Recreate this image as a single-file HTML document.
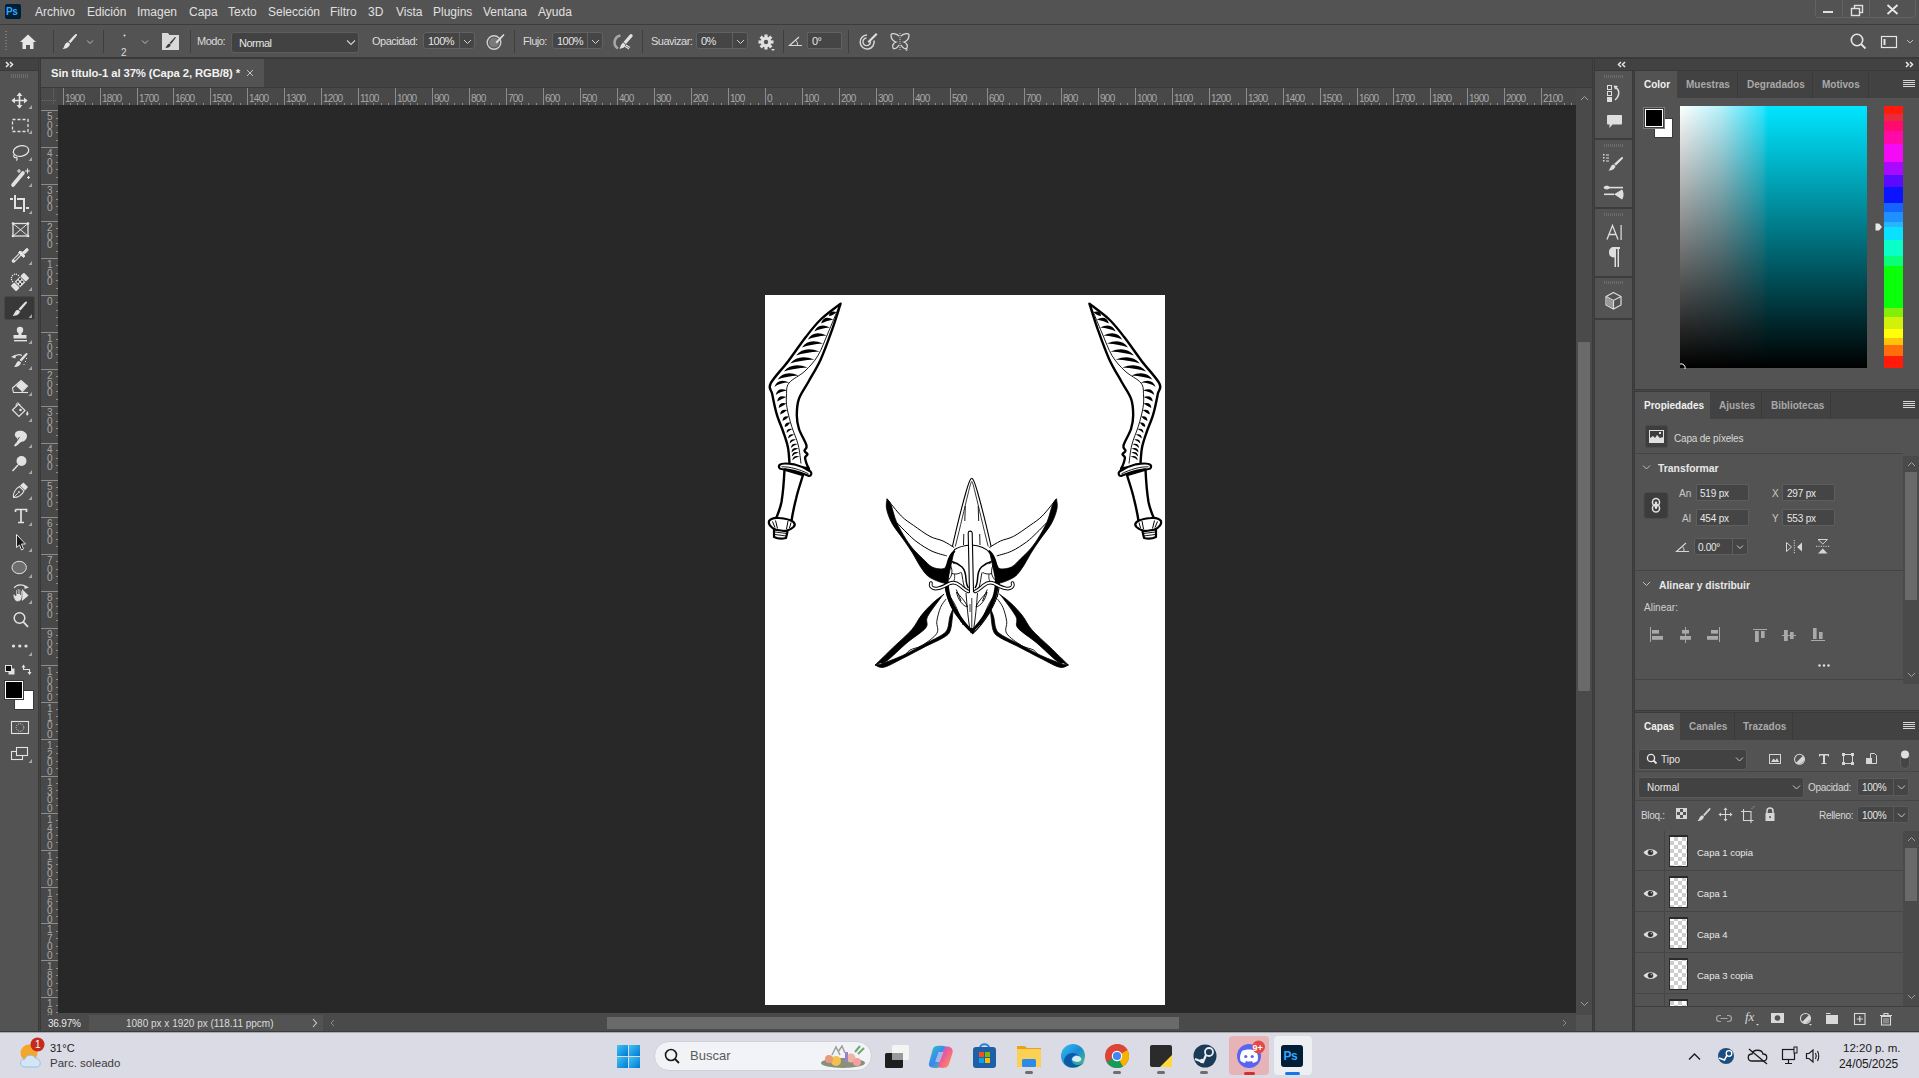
<!DOCTYPE html>
<html><head><meta charset="utf-8">
<style>
*{box-sizing:border-box;margin:0;padding:0}
html,body{width:1919px;height:1078px;overflow:hidden;background:#535353;font-family:"Liberation Sans",sans-serif;color:#e0e0e0}
.a{position:absolute}
.t{position:absolute;white-space:nowrap;font-size:12px;line-height:14px}
.s{position:absolute;white-space:nowrap;font-size:11px;line-height:13px;letter-spacing:-0.5px;color:#dcdcdc}
.rl{position:absolute;white-space:nowrap;font-size:10px;line-height:10px;color:#a8a8a8;letter-spacing:-0.7px}
.sep{position:absolute;width:1px;background:#424242}
.inp{position:absolute;background:#454545;border:1px solid #616161;border-radius:3px}
svg{position:absolute;overflow:visible}
.ic{fill:#d6d6d6}
.st{fill:none;stroke:#d6d6d6;stroke-width:1.3}
</style></head><body>
<!-- menu bar -->
<div class="a" style="left:0;top:0;width:1919px;height:24px;background:#535353"></div>
<div class="a" style="left:0;top:24px;width:1919px;height:1px;background:#3c3c3c"></div>
<!-- options bar -->
<div class="a" style="left:0;top:25px;width:1919px;height:33px;background:#535353"></div>
<div class="a" style="left:0;top:57px;width:1919px;height:2px;background:#3a3a3a"></div>
<!-- left toolbar column -->
<div class="a" style="left:0;top:59px;width:38px;height:973px;background:#535353"></div>
<div class="a" style="left:0;top:59px;width:38px;height:11px;background:#424242"></div><div class="a" style="left:0;top:70px;width:38px;height:1px;background:#393939"></div>
<div class="a" style="left:38px;top:59px;width:3px;height:972px;background:#393939;border-left:1px solid #393939;border-right:1px solid #393939"></div><div class="a" style="left:39px;top:59px;width:1px;height:972px;background:#434343"></div>
<!-- doc tab bar -->
<div class="a" style="left:41px;top:59px;width:1551px;height:28px;background:#424242"></div>
<div class="a" style="left:41px;top:59px;width:223px;height:28px;background:#535353"></div>
<div class="a" style="left:41px;top:87px;width:1551px;height:1px;background:#3a3a3a"></div>
<!-- rulers -->
<div class="a" style="left:41px;top:88px;width:1535px;height:17px;background:#484848"></div>
<div class="a" style="left:41px;top:105px;width:17px;height:910px;background:#484848"></div>
<div class="a" style="left:41px;top:88px;width:17px;height:17px;background:#4a4a4a"></div><svg style="left:0;top:0" width="1" height="1"><path d="M53.5 89 V104" stroke="#737373" stroke-width="1" stroke-dasharray="1 1.2"/><path d="M42 100.5 H57" stroke="#737373" stroke-width="1" stroke-dasharray="1 1.2"/></svg>
<!-- canvas area -->
<div class="a" style="left:58px;top:105px;width:1518px;height:910px;background:#282828"></div>
<!-- vertical scrollbar -->
<div class="a" style="left:1576px;top:88px;width:16px;height:927px;background:#4a4a4a"></div>
<div class="a" style="left:1578px;top:342px;width:12px;height:349px;background:#6a6a6a;border-radius:1px"></div>
<!-- status bar -->
<div class="a" style="left:41px;top:1013px;width:1551px;height:19px;background:#4a4a4a"></div>
<div class="a" style="left:1592px;top:59px;width:3px;height:972px;background:#393939"></div><div class="a" style="left:1593px;top:59px;width:1px;height:972px;background:#434343"></div>
<!-- right panels -->
<div class="a" style="left:1595px;top:59px;width:324px;height:11px;background:#424242"></div><div class="a" style="left:1595px;top:70px;width:324px;height:1px;background:#393939"></div>
<div class="a" style="left:1595px;top:71px;width:37px;height:961px;background:#535353"></div>
<div class="a" style="left:1632px;top:71px;width:3px;height:960px;background:#393939"></div><div class="a" style="left:1633px;top:71px;width:1px;height:960px;background:#434343"></div>
<div class="a" style="left:1635px;top:71px;width:284px;height:961px;background:#535353"></div>
<!-- white document -->
<div class="a" style="left:765px;top:295px;width:400px;height:710px;background:#fff"></div>
<svg width="1919" height="1078" style="left:0;top:0;position:absolute" shape-rendering="crispEdges">
<rect x="63" y="88" width="1" height="17" fill="#8c8c8c"/>
<rect x="70" y="103" width="1" height="2" fill="#8c8c8c"/>
<rect x="77" y="103" width="1" height="2" fill="#8c8c8c"/>
<rect x="85" y="103" width="1" height="2" fill="#8c8c8c"/>
<rect x="92" y="103" width="1" height="2" fill="#8c8c8c"/>
<rect x="100" y="88" width="1" height="17" fill="#8c8c8c"/>
<rect x="107" y="103" width="1" height="2" fill="#8c8c8c"/>
<rect x="114" y="103" width="1" height="2" fill="#8c8c8c"/>
<rect x="122" y="103" width="1" height="2" fill="#8c8c8c"/>
<rect x="129" y="103" width="1" height="2" fill="#8c8c8c"/>
<rect x="137" y="88" width="1" height="17" fill="#8c8c8c"/>
<rect x="144" y="103" width="1" height="2" fill="#8c8c8c"/>
<rect x="151" y="103" width="1" height="2" fill="#8c8c8c"/>
<rect x="159" y="103" width="1" height="2" fill="#8c8c8c"/>
<rect x="166" y="103" width="1" height="2" fill="#8c8c8c"/>
<rect x="173" y="88" width="1" height="17" fill="#8c8c8c"/>
<rect x="181" y="103" width="1" height="2" fill="#8c8c8c"/>
<rect x="188" y="103" width="1" height="2" fill="#8c8c8c"/>
<rect x="196" y="103" width="1" height="2" fill="#8c8c8c"/>
<rect x="203" y="103" width="1" height="2" fill="#8c8c8c"/>
<rect x="210" y="88" width="1" height="17" fill="#8c8c8c"/>
<rect x="218" y="103" width="1" height="2" fill="#8c8c8c"/>
<rect x="225" y="103" width="1" height="2" fill="#8c8c8c"/>
<rect x="233" y="103" width="1" height="2" fill="#8c8c8c"/>
<rect x="240" y="103" width="1" height="2" fill="#8c8c8c"/>
<rect x="247" y="88" width="1" height="17" fill="#8c8c8c"/>
<rect x="255" y="103" width="1" height="2" fill="#8c8c8c"/>
<rect x="262" y="103" width="1" height="2" fill="#8c8c8c"/>
<rect x="270" y="103" width="1" height="2" fill="#8c8c8c"/>
<rect x="277" y="103" width="1" height="2" fill="#8c8c8c"/>
<rect x="284" y="88" width="1" height="17" fill="#8c8c8c"/>
<rect x="292" y="103" width="1" height="2" fill="#8c8c8c"/>
<rect x="299" y="103" width="1" height="2" fill="#8c8c8c"/>
<rect x="307" y="103" width="1" height="2" fill="#8c8c8c"/>
<rect x="314" y="103" width="1" height="2" fill="#8c8c8c"/>
<rect x="321" y="88" width="1" height="17" fill="#8c8c8c"/>
<rect x="329" y="103" width="1" height="2" fill="#8c8c8c"/>
<rect x="336" y="103" width="1" height="2" fill="#8c8c8c"/>
<rect x="344" y="103" width="1" height="2" fill="#8c8c8c"/>
<rect x="351" y="103" width="1" height="2" fill="#8c8c8c"/>
<rect x="358" y="88" width="1" height="17" fill="#8c8c8c"/>
<rect x="366" y="103" width="1" height="2" fill="#8c8c8c"/>
<rect x="373" y="103" width="1" height="2" fill="#8c8c8c"/>
<rect x="381" y="103" width="1" height="2" fill="#8c8c8c"/>
<rect x="388" y="103" width="1" height="2" fill="#8c8c8c"/>
<rect x="395" y="88" width="1" height="17" fill="#8c8c8c"/>
<rect x="403" y="103" width="1" height="2" fill="#8c8c8c"/>
<rect x="410" y="103" width="1" height="2" fill="#8c8c8c"/>
<rect x="417" y="103" width="1" height="2" fill="#8c8c8c"/>
<rect x="425" y="103" width="1" height="2" fill="#8c8c8c"/>
<rect x="432" y="88" width="1" height="17" fill="#8c8c8c"/>
<rect x="440" y="103" width="1" height="2" fill="#8c8c8c"/>
<rect x="447" y="103" width="1" height="2" fill="#8c8c8c"/>
<rect x="454" y="103" width="1" height="2" fill="#8c8c8c"/>
<rect x="462" y="103" width="1" height="2" fill="#8c8c8c"/>
<rect x="469" y="88" width="1" height="17" fill="#8c8c8c"/>
<rect x="477" y="103" width="1" height="2" fill="#8c8c8c"/>
<rect x="484" y="103" width="1" height="2" fill="#8c8c8c"/>
<rect x="491" y="103" width="1" height="2" fill="#8c8c8c"/>
<rect x="499" y="103" width="1" height="2" fill="#8c8c8c"/>
<rect x="506" y="88" width="1" height="17" fill="#8c8c8c"/>
<rect x="514" y="103" width="1" height="2" fill="#8c8c8c"/>
<rect x="521" y="103" width="1" height="2" fill="#8c8c8c"/>
<rect x="528" y="103" width="1" height="2" fill="#8c8c8c"/>
<rect x="536" y="103" width="1" height="2" fill="#8c8c8c"/>
<rect x="543" y="88" width="1" height="17" fill="#8c8c8c"/>
<rect x="551" y="103" width="1" height="2" fill="#8c8c8c"/>
<rect x="558" y="103" width="1" height="2" fill="#8c8c8c"/>
<rect x="565" y="103" width="1" height="2" fill="#8c8c8c"/>
<rect x="573" y="103" width="1" height="2" fill="#8c8c8c"/>
<rect x="580" y="88" width="1" height="17" fill="#8c8c8c"/>
<rect x="588" y="103" width="1" height="2" fill="#8c8c8c"/>
<rect x="595" y="103" width="1" height="2" fill="#8c8c8c"/>
<rect x="602" y="103" width="1" height="2" fill="#8c8c8c"/>
<rect x="610" y="103" width="1" height="2" fill="#8c8c8c"/>
<rect x="617" y="88" width="1" height="17" fill="#8c8c8c"/>
<rect x="625" y="103" width="1" height="2" fill="#8c8c8c"/>
<rect x="632" y="103" width="1" height="2" fill="#8c8c8c"/>
<rect x="639" y="103" width="1" height="2" fill="#8c8c8c"/>
<rect x="647" y="103" width="1" height="2" fill="#8c8c8c"/>
<rect x="654" y="88" width="1" height="17" fill="#8c8c8c"/>
<rect x="661" y="103" width="1" height="2" fill="#8c8c8c"/>
<rect x="669" y="103" width="1" height="2" fill="#8c8c8c"/>
<rect x="676" y="103" width="1" height="2" fill="#8c8c8c"/>
<rect x="684" y="103" width="1" height="2" fill="#8c8c8c"/>
<rect x="691" y="88" width="1" height="17" fill="#8c8c8c"/>
<rect x="698" y="103" width="1" height="2" fill="#8c8c8c"/>
<rect x="706" y="103" width="1" height="2" fill="#8c8c8c"/>
<rect x="713" y="103" width="1" height="2" fill="#8c8c8c"/>
<rect x="721" y="103" width="1" height="2" fill="#8c8c8c"/>
<rect x="728" y="88" width="1" height="17" fill="#8c8c8c"/>
<rect x="735" y="103" width="1" height="2" fill="#8c8c8c"/>
<rect x="743" y="103" width="1" height="2" fill="#8c8c8c"/>
<rect x="750" y="103" width="1" height="2" fill="#8c8c8c"/>
<rect x="758" y="103" width="1" height="2" fill="#8c8c8c"/>
<rect x="765" y="88" width="1" height="17" fill="#8c8c8c"/>
<rect x="772" y="103" width="1" height="2" fill="#8c8c8c"/>
<rect x="780" y="103" width="1" height="2" fill="#8c8c8c"/>
<rect x="787" y="103" width="1" height="2" fill="#8c8c8c"/>
<rect x="795" y="103" width="1" height="2" fill="#8c8c8c"/>
<rect x="802" y="88" width="1" height="17" fill="#8c8c8c"/>
<rect x="809" y="103" width="1" height="2" fill="#8c8c8c"/>
<rect x="817" y="103" width="1" height="2" fill="#8c8c8c"/>
<rect x="824" y="103" width="1" height="2" fill="#8c8c8c"/>
<rect x="832" y="103" width="1" height="2" fill="#8c8c8c"/>
<rect x="839" y="88" width="1" height="17" fill="#8c8c8c"/>
<rect x="846" y="103" width="1" height="2" fill="#8c8c8c"/>
<rect x="854" y="103" width="1" height="2" fill="#8c8c8c"/>
<rect x="861" y="103" width="1" height="2" fill="#8c8c8c"/>
<rect x="869" y="103" width="1" height="2" fill="#8c8c8c"/>
<rect x="876" y="88" width="1" height="17" fill="#8c8c8c"/>
<rect x="883" y="103" width="1" height="2" fill="#8c8c8c"/>
<rect x="891" y="103" width="1" height="2" fill="#8c8c8c"/>
<rect x="898" y="103" width="1" height="2" fill="#8c8c8c"/>
<rect x="905" y="103" width="1" height="2" fill="#8c8c8c"/>
<rect x="913" y="88" width="1" height="17" fill="#8c8c8c"/>
<rect x="920" y="103" width="1" height="2" fill="#8c8c8c"/>
<rect x="928" y="103" width="1" height="2" fill="#8c8c8c"/>
<rect x="935" y="103" width="1" height="2" fill="#8c8c8c"/>
<rect x="942" y="103" width="1" height="2" fill="#8c8c8c"/>
<rect x="950" y="88" width="1" height="17" fill="#8c8c8c"/>
<rect x="957" y="103" width="1" height="2" fill="#8c8c8c"/>
<rect x="965" y="103" width="1" height="2" fill="#8c8c8c"/>
<rect x="972" y="103" width="1" height="2" fill="#8c8c8c"/>
<rect x="979" y="103" width="1" height="2" fill="#8c8c8c"/>
<rect x="987" y="88" width="1" height="17" fill="#8c8c8c"/>
<rect x="994" y="103" width="1" height="2" fill="#8c8c8c"/>
<rect x="1002" y="103" width="1" height="2" fill="#8c8c8c"/>
<rect x="1009" y="103" width="1" height="2" fill="#8c8c8c"/>
<rect x="1016" y="103" width="1" height="2" fill="#8c8c8c"/>
<rect x="1024" y="88" width="1" height="17" fill="#8c8c8c"/>
<rect x="1031" y="103" width="1" height="2" fill="#8c8c8c"/>
<rect x="1039" y="103" width="1" height="2" fill="#8c8c8c"/>
<rect x="1046" y="103" width="1" height="2" fill="#8c8c8c"/>
<rect x="1053" y="103" width="1" height="2" fill="#8c8c8c"/>
<rect x="1061" y="88" width="1" height="17" fill="#8c8c8c"/>
<rect x="1068" y="103" width="1" height="2" fill="#8c8c8c"/>
<rect x="1076" y="103" width="1" height="2" fill="#8c8c8c"/>
<rect x="1083" y="103" width="1" height="2" fill="#8c8c8c"/>
<rect x="1090" y="103" width="1" height="2" fill="#8c8c8c"/>
<rect x="1098" y="88" width="1" height="17" fill="#8c8c8c"/>
<rect x="1105" y="103" width="1" height="2" fill="#8c8c8c"/>
<rect x="1113" y="103" width="1" height="2" fill="#8c8c8c"/>
<rect x="1120" y="103" width="1" height="2" fill="#8c8c8c"/>
<rect x="1127" y="103" width="1" height="2" fill="#8c8c8c"/>
<rect x="1135" y="88" width="1" height="17" fill="#8c8c8c"/>
<rect x="1142" y="103" width="1" height="2" fill="#8c8c8c"/>
<rect x="1149" y="103" width="1" height="2" fill="#8c8c8c"/>
<rect x="1157" y="103" width="1" height="2" fill="#8c8c8c"/>
<rect x="1164" y="103" width="1" height="2" fill="#8c8c8c"/>
<rect x="1172" y="88" width="1" height="17" fill="#8c8c8c"/>
<rect x="1179" y="103" width="1" height="2" fill="#8c8c8c"/>
<rect x="1186" y="103" width="1" height="2" fill="#8c8c8c"/>
<rect x="1194" y="103" width="1" height="2" fill="#8c8c8c"/>
<rect x="1201" y="103" width="1" height="2" fill="#8c8c8c"/>
<rect x="1209" y="88" width="1" height="17" fill="#8c8c8c"/>
<rect x="1216" y="103" width="1" height="2" fill="#8c8c8c"/>
<rect x="1223" y="103" width="1" height="2" fill="#8c8c8c"/>
<rect x="1231" y="103" width="1" height="2" fill="#8c8c8c"/>
<rect x="1238" y="103" width="1" height="2" fill="#8c8c8c"/>
<rect x="1246" y="88" width="1" height="17" fill="#8c8c8c"/>
<rect x="1253" y="103" width="1" height="2" fill="#8c8c8c"/>
<rect x="1260" y="103" width="1" height="2" fill="#8c8c8c"/>
<rect x="1268" y="103" width="1" height="2" fill="#8c8c8c"/>
<rect x="1275" y="103" width="1" height="2" fill="#8c8c8c"/>
<rect x="1283" y="88" width="1" height="17" fill="#8c8c8c"/>
<rect x="1290" y="103" width="1" height="2" fill="#8c8c8c"/>
<rect x="1297" y="103" width="1" height="2" fill="#8c8c8c"/>
<rect x="1305" y="103" width="1" height="2" fill="#8c8c8c"/>
<rect x="1312" y="103" width="1" height="2" fill="#8c8c8c"/>
<rect x="1320" y="88" width="1" height="17" fill="#8c8c8c"/>
<rect x="1327" y="103" width="1" height="2" fill="#8c8c8c"/>
<rect x="1334" y="103" width="1" height="2" fill="#8c8c8c"/>
<rect x="1342" y="103" width="1" height="2" fill="#8c8c8c"/>
<rect x="1349" y="103" width="1" height="2" fill="#8c8c8c"/>
<rect x="1357" y="88" width="1" height="17" fill="#8c8c8c"/>
<rect x="1364" y="103" width="1" height="2" fill="#8c8c8c"/>
<rect x="1371" y="103" width="1" height="2" fill="#8c8c8c"/>
<rect x="1379" y="103" width="1" height="2" fill="#8c8c8c"/>
<rect x="1386" y="103" width="1" height="2" fill="#8c8c8c"/>
<rect x="1393" y="88" width="1" height="17" fill="#8c8c8c"/>
<rect x="1401" y="103" width="1" height="2" fill="#8c8c8c"/>
<rect x="1408" y="103" width="1" height="2" fill="#8c8c8c"/>
<rect x="1416" y="103" width="1" height="2" fill="#8c8c8c"/>
<rect x="1423" y="103" width="1" height="2" fill="#8c8c8c"/>
<rect x="1430" y="88" width="1" height="17" fill="#8c8c8c"/>
<rect x="1438" y="103" width="1" height="2" fill="#8c8c8c"/>
<rect x="1445" y="103" width="1" height="2" fill="#8c8c8c"/>
<rect x="1453" y="103" width="1" height="2" fill="#8c8c8c"/>
<rect x="1460" y="103" width="1" height="2" fill="#8c8c8c"/>
<rect x="1467" y="88" width="1" height="17" fill="#8c8c8c"/>
<rect x="1475" y="103" width="1" height="2" fill="#8c8c8c"/>
<rect x="1482" y="103" width="1" height="2" fill="#8c8c8c"/>
<rect x="1490" y="103" width="1" height="2" fill="#8c8c8c"/>
<rect x="1497" y="103" width="1" height="2" fill="#8c8c8c"/>
<rect x="1504" y="88" width="1" height="17" fill="#8c8c8c"/>
<rect x="1512" y="103" width="1" height="2" fill="#8c8c8c"/>
<rect x="1519" y="103" width="1" height="2" fill="#8c8c8c"/>
<rect x="1527" y="103" width="1" height="2" fill="#8c8c8c"/>
<rect x="1534" y="103" width="1" height="2" fill="#8c8c8c"/>
<rect x="1541" y="88" width="1" height="17" fill="#8c8c8c"/>
<rect x="1549" y="103" width="1" height="2" fill="#8c8c8c"/>
<rect x="1556" y="103" width="1" height="2" fill="#8c8c8c"/>
<rect x="1564" y="103" width="1" height="2" fill="#8c8c8c"/>
<rect x="1571" y="103" width="1" height="2" fill="#8c8c8c"/>
<rect x="41" y="110" width="17" height="1" fill="#8c8c8c"/>
<rect x="56" y="118" width="2" height="1" fill="#8c8c8c"/>
<rect x="56" y="125" width="2" height="1" fill="#8c8c8c"/>
<rect x="56" y="132" width="2" height="1" fill="#8c8c8c"/>
<rect x="56" y="140" width="2" height="1" fill="#8c8c8c"/>
<rect x="41" y="147" width="17" height="1" fill="#8c8c8c"/>
<rect x="56" y="155" width="2" height="1" fill="#8c8c8c"/>
<rect x="56" y="162" width="2" height="1" fill="#8c8c8c"/>
<rect x="56" y="169" width="2" height="1" fill="#8c8c8c"/>
<rect x="56" y="177" width="2" height="1" fill="#8c8c8c"/>
<rect x="41" y="184" width="17" height="1" fill="#8c8c8c"/>
<rect x="56" y="191" width="2" height="1" fill="#8c8c8c"/>
<rect x="56" y="199" width="2" height="1" fill="#8c8c8c"/>
<rect x="56" y="206" width="2" height="1" fill="#8c8c8c"/>
<rect x="56" y="214" width="2" height="1" fill="#8c8c8c"/>
<rect x="41" y="221" width="17" height="1" fill="#8c8c8c"/>
<rect x="56" y="228" width="2" height="1" fill="#8c8c8c"/>
<rect x="56" y="236" width="2" height="1" fill="#8c8c8c"/>
<rect x="56" y="243" width="2" height="1" fill="#8c8c8c"/>
<rect x="56" y="251" width="2" height="1" fill="#8c8c8c"/>
<rect x="41" y="258" width="17" height="1" fill="#8c8c8c"/>
<rect x="56" y="265" width="2" height="1" fill="#8c8c8c"/>
<rect x="56" y="273" width="2" height="1" fill="#8c8c8c"/>
<rect x="56" y="280" width="2" height="1" fill="#8c8c8c"/>
<rect x="56" y="288" width="2" height="1" fill="#8c8c8c"/>
<rect x="41" y="295" width="17" height="1" fill="#8c8c8c"/>
<rect x="56" y="302" width="2" height="1" fill="#8c8c8c"/>
<rect x="56" y="310" width="2" height="1" fill="#8c8c8c"/>
<rect x="56" y="317" width="2" height="1" fill="#8c8c8c"/>
<rect x="56" y="325" width="2" height="1" fill="#8c8c8c"/>
<rect x="41" y="332" width="17" height="1" fill="#8c8c8c"/>
<rect x="56" y="339" width="2" height="1" fill="#8c8c8c"/>
<rect x="56" y="347" width="2" height="1" fill="#8c8c8c"/>
<rect x="56" y="354" width="2" height="1" fill="#8c8c8c"/>
<rect x="56" y="362" width="2" height="1" fill="#8c8c8c"/>
<rect x="41" y="369" width="17" height="1" fill="#8c8c8c"/>
<rect x="56" y="376" width="2" height="1" fill="#8c8c8c"/>
<rect x="56" y="384" width="2" height="1" fill="#8c8c8c"/>
<rect x="56" y="391" width="2" height="1" fill="#8c8c8c"/>
<rect x="56" y="399" width="2" height="1" fill="#8c8c8c"/>
<rect x="41" y="406" width="17" height="1" fill="#8c8c8c"/>
<rect x="56" y="413" width="2" height="1" fill="#8c8c8c"/>
<rect x="56" y="421" width="2" height="1" fill="#8c8c8c"/>
<rect x="56" y="428" width="2" height="1" fill="#8c8c8c"/>
<rect x="56" y="435" width="2" height="1" fill="#8c8c8c"/>
<rect x="41" y="443" width="17" height="1" fill="#8c8c8c"/>
<rect x="56" y="450" width="2" height="1" fill="#8c8c8c"/>
<rect x="56" y="458" width="2" height="1" fill="#8c8c8c"/>
<rect x="56" y="465" width="2" height="1" fill="#8c8c8c"/>
<rect x="56" y="472" width="2" height="1" fill="#8c8c8c"/>
<rect x="41" y="480" width="17" height="1" fill="#8c8c8c"/>
<rect x="56" y="487" width="2" height="1" fill="#8c8c8c"/>
<rect x="56" y="495" width="2" height="1" fill="#8c8c8c"/>
<rect x="56" y="502" width="2" height="1" fill="#8c8c8c"/>
<rect x="56" y="509" width="2" height="1" fill="#8c8c8c"/>
<rect x="41" y="517" width="17" height="1" fill="#8c8c8c"/>
<rect x="56" y="524" width="2" height="1" fill="#8c8c8c"/>
<rect x="56" y="532" width="2" height="1" fill="#8c8c8c"/>
<rect x="56" y="539" width="2" height="1" fill="#8c8c8c"/>
<rect x="56" y="546" width="2" height="1" fill="#8c8c8c"/>
<rect x="41" y="554" width="17" height="1" fill="#8c8c8c"/>
<rect x="56" y="561" width="2" height="1" fill="#8c8c8c"/>
<rect x="56" y="569" width="2" height="1" fill="#8c8c8c"/>
<rect x="56" y="576" width="2" height="1" fill="#8c8c8c"/>
<rect x="56" y="583" width="2" height="1" fill="#8c8c8c"/>
<rect x="41" y="591" width="17" height="1" fill="#8c8c8c"/>
<rect x="56" y="598" width="2" height="1" fill="#8c8c8c"/>
<rect x="56" y="606" width="2" height="1" fill="#8c8c8c"/>
<rect x="56" y="613" width="2" height="1" fill="#8c8c8c"/>
<rect x="56" y="620" width="2" height="1" fill="#8c8c8c"/>
<rect x="41" y="628" width="17" height="1" fill="#8c8c8c"/>
<rect x="56" y="635" width="2" height="1" fill="#8c8c8c"/>
<rect x="56" y="643" width="2" height="1" fill="#8c8c8c"/>
<rect x="56" y="650" width="2" height="1" fill="#8c8c8c"/>
<rect x="56" y="657" width="2" height="1" fill="#8c8c8c"/>
<rect x="41" y="665" width="17" height="1" fill="#8c8c8c"/>
<rect x="56" y="672" width="2" height="1" fill="#8c8c8c"/>
<rect x="56" y="679" width="2" height="1" fill="#8c8c8c"/>
<rect x="56" y="687" width="2" height="1" fill="#8c8c8c"/>
<rect x="56" y="694" width="2" height="1" fill="#8c8c8c"/>
<rect x="41" y="702" width="17" height="1" fill="#8c8c8c"/>
<rect x="56" y="709" width="2" height="1" fill="#8c8c8c"/>
<rect x="56" y="716" width="2" height="1" fill="#8c8c8c"/>
<rect x="56" y="724" width="2" height="1" fill="#8c8c8c"/>
<rect x="56" y="731" width="2" height="1" fill="#8c8c8c"/>
<rect x="41" y="739" width="17" height="1" fill="#8c8c8c"/>
<rect x="56" y="746" width="2" height="1" fill="#8c8c8c"/>
<rect x="56" y="753" width="2" height="1" fill="#8c8c8c"/>
<rect x="56" y="761" width="2" height="1" fill="#8c8c8c"/>
<rect x="56" y="768" width="2" height="1" fill="#8c8c8c"/>
<rect x="41" y="776" width="17" height="1" fill="#8c8c8c"/>
<rect x="56" y="783" width="2" height="1" fill="#8c8c8c"/>
<rect x="56" y="790" width="2" height="1" fill="#8c8c8c"/>
<rect x="56" y="798" width="2" height="1" fill="#8c8c8c"/>
<rect x="56" y="805" width="2" height="1" fill="#8c8c8c"/>
<rect x="41" y="813" width="17" height="1" fill="#8c8c8c"/>
<rect x="56" y="820" width="2" height="1" fill="#8c8c8c"/>
<rect x="56" y="827" width="2" height="1" fill="#8c8c8c"/>
<rect x="56" y="835" width="2" height="1" fill="#8c8c8c"/>
<rect x="56" y="842" width="2" height="1" fill="#8c8c8c"/>
<rect x="41" y="850" width="17" height="1" fill="#8c8c8c"/>
<rect x="56" y="857" width="2" height="1" fill="#8c8c8c"/>
<rect x="56" y="864" width="2" height="1" fill="#8c8c8c"/>
<rect x="56" y="872" width="2" height="1" fill="#8c8c8c"/>
<rect x="56" y="879" width="2" height="1" fill="#8c8c8c"/>
<rect x="41" y="887" width="17" height="1" fill="#8c8c8c"/>
<rect x="56" y="894" width="2" height="1" fill="#8c8c8c"/>
<rect x="56" y="901" width="2" height="1" fill="#8c8c8c"/>
<rect x="56" y="909" width="2" height="1" fill="#8c8c8c"/>
<rect x="56" y="916" width="2" height="1" fill="#8c8c8c"/>
<rect x="41" y="923" width="17" height="1" fill="#8c8c8c"/>
<rect x="56" y="931" width="2" height="1" fill="#8c8c8c"/>
<rect x="56" y="938" width="2" height="1" fill="#8c8c8c"/>
<rect x="56" y="946" width="2" height="1" fill="#8c8c8c"/>
<rect x="56" y="953" width="2" height="1" fill="#8c8c8c"/>
<rect x="41" y="960" width="17" height="1" fill="#8c8c8c"/>
<rect x="56" y="968" width="2" height="1" fill="#8c8c8c"/>
<rect x="56" y="975" width="2" height="1" fill="#8c8c8c"/>
<rect x="56" y="983" width="2" height="1" fill="#8c8c8c"/>
<rect x="56" y="990" width="2" height="1" fill="#8c8c8c"/>
<rect x="41" y="997" width="17" height="1" fill="#8c8c8c"/>
<rect x="56" y="1005" width="2" height="1" fill="#8c8c8c"/>
<rect x="56" y="1012" width="2" height="1" fill="#8c8c8c"/>
</svg>
<div class="rl" style="left:65px;top:94px">1900</div>
<div class="rl" style="left:102px;top:94px">1800</div>
<div class="rl" style="left:139px;top:94px">1700</div>
<div class="rl" style="left:175px;top:94px">1600</div>
<div class="rl" style="left:212px;top:94px">1500</div>
<div class="rl" style="left:249px;top:94px">1400</div>
<div class="rl" style="left:286px;top:94px">1300</div>
<div class="rl" style="left:323px;top:94px">1200</div>
<div class="rl" style="left:360px;top:94px">1100</div>
<div class="rl" style="left:397px;top:94px">1000</div>
<div class="rl" style="left:434px;top:94px">900</div>
<div class="rl" style="left:471px;top:94px">800</div>
<div class="rl" style="left:508px;top:94px">700</div>
<div class="rl" style="left:545px;top:94px">600</div>
<div class="rl" style="left:582px;top:94px">500</div>
<div class="rl" style="left:619px;top:94px">400</div>
<div class="rl" style="left:656px;top:94px">300</div>
<div class="rl" style="left:693px;top:94px">200</div>
<div class="rl" style="left:730px;top:94px">100</div>
<div class="rl" style="left:767px;top:94px">0</div>
<div class="rl" style="left:804px;top:94px">100</div>
<div class="rl" style="left:841px;top:94px">200</div>
<div class="rl" style="left:878px;top:94px">300</div>
<div class="rl" style="left:915px;top:94px">400</div>
<div class="rl" style="left:952px;top:94px">500</div>
<div class="rl" style="left:989px;top:94px">600</div>
<div class="rl" style="left:1026px;top:94px">700</div>
<div class="rl" style="left:1063px;top:94px">800</div>
<div class="rl" style="left:1100px;top:94px">900</div>
<div class="rl" style="left:1137px;top:94px">1000</div>
<div class="rl" style="left:1174px;top:94px">1100</div>
<div class="rl" style="left:1211px;top:94px">1200</div>
<div class="rl" style="left:1248px;top:94px">1300</div>
<div class="rl" style="left:1285px;top:94px">1400</div>
<div class="rl" style="left:1322px;top:94px">1500</div>
<div class="rl" style="left:1359px;top:94px">1600</div>
<div class="rl" style="left:1395px;top:94px">1700</div>
<div class="rl" style="left:1432px;top:94px">1800</div>
<div class="rl" style="left:1469px;top:94px">1900</div>
<div class="rl" style="left:1506px;top:94px">2000</div>
<div class="rl" style="left:1543px;top:94px">2100</div>
<div style="position:absolute;left:41px;top:105px;width:17px;height:910px;overflow:hidden">
<div class="rl" style="left:6px;top:7.0px">5</div>
<div class="rl" style="left:6px;top:15.5px">0</div>
<div class="rl" style="left:6px;top:24.0px">0</div>
<div class="rl" style="left:6px;top:44.0px">4</div>
<div class="rl" style="left:6px;top:52.5px">0</div>
<div class="rl" style="left:6px;top:61.0px">0</div>
<div class="rl" style="left:6px;top:81.0px">3</div>
<div class="rl" style="left:6px;top:89.5px">0</div>
<div class="rl" style="left:6px;top:98.0px">0</div>
<div class="rl" style="left:6px;top:118.0px">2</div>
<div class="rl" style="left:6px;top:126.5px">0</div>
<div class="rl" style="left:6px;top:135.0px">0</div>
<div class="rl" style="left:6px;top:155.0px">1</div>
<div class="rl" style="left:6px;top:163.5px">0</div>
<div class="rl" style="left:6px;top:172.0px">0</div>
<div class="rl" style="left:6px;top:192.0px">0</div>
<div class="rl" style="left:6px;top:229.0px">1</div>
<div class="rl" style="left:6px;top:237.5px">0</div>
<div class="rl" style="left:6px;top:246.0px">0</div>
<div class="rl" style="left:6px;top:266.0px">2</div>
<div class="rl" style="left:6px;top:274.5px">0</div>
<div class="rl" style="left:6px;top:283.0px">0</div>
<div class="rl" style="left:6px;top:303.0px">3</div>
<div class="rl" style="left:6px;top:311.5px">0</div>
<div class="rl" style="left:6px;top:320.0px">0</div>
<div class="rl" style="left:6px;top:340.0px">4</div>
<div class="rl" style="left:6px;top:348.5px">0</div>
<div class="rl" style="left:6px;top:357.0px">0</div>
<div class="rl" style="left:6px;top:377.0px">5</div>
<div class="rl" style="left:6px;top:385.5px">0</div>
<div class="rl" style="left:6px;top:394.0px">0</div>
<div class="rl" style="left:6px;top:414.0px">6</div>
<div class="rl" style="left:6px;top:422.5px">0</div>
<div class="rl" style="left:6px;top:431.0px">0</div>
<div class="rl" style="left:6px;top:451.0px">7</div>
<div class="rl" style="left:6px;top:459.5px">0</div>
<div class="rl" style="left:6px;top:468.0px">0</div>
<div class="rl" style="left:6px;top:488.0px">8</div>
<div class="rl" style="left:6px;top:496.5px">0</div>
<div class="rl" style="left:6px;top:505.0px">0</div>
<div class="rl" style="left:6px;top:525.0px">9</div>
<div class="rl" style="left:6px;top:533.5px">0</div>
<div class="rl" style="left:6px;top:542.0px">0</div>
<div class="rl" style="left:6px;top:562.0px">1</div>
<div class="rl" style="left:6px;top:570.5px">0</div>
<div class="rl" style="left:6px;top:579.0px">0</div>
<div class="rl" style="left:6px;top:587.5px">0</div>
<div class="rl" style="left:6px;top:599.0px">1</div>
<div class="rl" style="left:6px;top:607.5px">1</div>
<div class="rl" style="left:6px;top:616.0px">0</div>
<div class="rl" style="left:6px;top:624.5px">0</div>
<div class="rl" style="left:6px;top:636.0px">1</div>
<div class="rl" style="left:6px;top:644.5px">2</div>
<div class="rl" style="left:6px;top:653.0px">0</div>
<div class="rl" style="left:6px;top:661.5px">0</div>
<div class="rl" style="left:6px;top:673.0px">1</div>
<div class="rl" style="left:6px;top:681.5px">3</div>
<div class="rl" style="left:6px;top:690.0px">0</div>
<div class="rl" style="left:6px;top:698.5px">0</div>
<div class="rl" style="left:6px;top:710.0px">1</div>
<div class="rl" style="left:6px;top:718.5px">4</div>
<div class="rl" style="left:6px;top:727.0px">0</div>
<div class="rl" style="left:6px;top:735.5px">0</div>
<div class="rl" style="left:6px;top:747.0px">1</div>
<div class="rl" style="left:6px;top:755.5px">5</div>
<div class="rl" style="left:6px;top:764.0px">0</div>
<div class="rl" style="left:6px;top:772.5px">0</div>
<div class="rl" style="left:6px;top:784.0px">1</div>
<div class="rl" style="left:6px;top:792.5px">6</div>
<div class="rl" style="left:6px;top:801.0px">0</div>
<div class="rl" style="left:6px;top:809.5px">0</div>
<div class="rl" style="left:6px;top:820.0px">1</div>
<div class="rl" style="left:6px;top:828.5px">7</div>
<div class="rl" style="left:6px;top:837.0px">0</div>
<div class="rl" style="left:6px;top:845.5px">0</div>
<div class="rl" style="left:6px;top:857.0px">1</div>
<div class="rl" style="left:6px;top:865.5px">8</div>
<div class="rl" style="left:6px;top:874.0px">0</div>
<div class="rl" style="left:6px;top:882.5px">0</div>
<div class="rl" style="left:6px;top:894.0px">1</div>
<div class="rl" style="left:6px;top:902.5px">9</div>
<div class="rl" style="left:6px;top:911.0px">0</div>
<div class="rl" style="left:6px;top:919.5px">0</div>
</div>
<!-- PS logo -->
<div class="a" style="left:5px;top:4px;width:16px;height:15px;background:#001e36;border-radius:2px"></div>
<div class="a" style="left:6px;top:5px;font-size:10px;line-height:13px;font-weight:700;color:#31a8ff;letter-spacing:-0.3px">Ps</div>
<div class="t" style="left:35px;top:5px">Archivo</div>
<div class="t" style="left:87px;top:5px">Edición</div>
<div class="t" style="left:137px;top:5px">Imagen</div>
<div class="t" style="left:189px;top:5px">Capa</div>
<div class="t" style="left:228px;top:5px">Texto</div>
<div class="t" style="left:268px;top:5px">Selección</div>
<div class="t" style="left:330px;top:5px">Filtro</div>
<div class="t" style="left:368px;top:5px">3D</div>
<div class="t" style="left:396px;top:5px">Vista</div>
<div class="t" style="left:433px;top:5px">Plugins</div>
<div class="t" style="left:483px;top:5px">Ventana</div>
<div class="t" style="left:538px;top:5px">Ayuda</div>
<!-- window controls -->
<div class="a" style="left:1815px;top:-3px;width:101px;height:21px;border:1px solid #626262;border-radius:3px"></div>
<div class="a" style="left:1842px;top:0;width:1px;height:17px;background:#626262"></div>
<div class="a" style="left:1869px;top:0;width:1px;height:17px;background:#626262"></div>
<svg style="left:0;top:0" width="1" height="1">
<rect x="1823" y="11" width="10" height="2" fill="#e0e0e0"/>
<rect x="1854.5" y="5.5" width="8" height="7" fill="none" stroke="#e0e0e0" stroke-width="1.4"/>
<rect x="1851.5" y="8.5" width="8" height="7" fill="#535353" stroke="#e0e0e0" stroke-width="1.4"/>
<path d="M1887.5 5 L1897.5 14 M1897.5 5 L1887.5 14" stroke="#e8e8e8" stroke-width="1.8"/>
</svg>
<svg style="left:0;top:0" width="1" height="1">
<!-- grip -->
<g fill="#7a7a7a"><rect x="5" y="31" width="2" height="1"/><rect x="5" y="34" width="2" height="1"/><rect x="5" y="37" width="2" height="1"/><rect x="5" y="40" width="2" height="1"/><rect x="5" y="43" width="2" height="1"/><rect x="5" y="46" width="2" height="1"/><rect x="5" y="49" width="2" height="1"/></g>
<!-- home -->
<path d="M28 34.5 L36 42 L33.5 42 L33.5 49 L30 49 L30 45 L26 45 L26 49 L22.5 49 L22.5 42 L20 42 Z" fill="#e6e6e6"/>
<rect x="53" y="30" width="1" height="23" fill="#3e3e3e"/>
<!-- brush icon -->
<path d="M76.5 34 C77.5 34.5 77 35.5 76 36.5 L70.5 43 L68.5 41.5 L74 35.5 C75 34.5 75.8 33.8 76.5 34 Z" fill="#e6e6e6"/>
<path d="M68 42.3 L70 43.8 C69.5 46.5 67.5 49 62.5 49 C64 47.5 64 46.5 65 44.5 C65.8 43 67 42.5 68 42.3 Z" fill="#e6e6e6"/>
<path d="M87 40.5 L90 43.5 L93 40.5" fill="none" stroke="#bdbdbd" stroke-width="1"/>
<rect x="103" y="30" width="1" height="23" fill="#3e3e3e"/>
<circle cx="124.5" cy="35.5" r="1" fill="#e6e6e6"/>
<path d="M142 40.5 L145 43.5 L148 40.5" fill="none" stroke="#bdbdbd" stroke-width="1"/>
<!-- brush panel toggle -->
<path d="M162 33 L168 33 L169.5 35 L179 35 L179 50 L162 50 Z" fill="#d9d9d9"/>
<path d="M176 37.5 L171 44 L169.5 43 L175 37 Z" fill="#3a3a3a"/>
<path d="M169 43.5 L170.8 44.8 C170 47 168.5 48 165.5 48 C166.5 46.5 167 44.5 169 43.5Z" fill="#3a3a3a"/>
<rect x="190" y="30" width="1" height="23" fill="#3e3e3e"/>
</svg>
<div class="s" style="left:121px;top:46px;font-size:10px">2</div>
<div class="s" style="left:197px;top:35px">Modo:</div>
<div class="inp" style="left:231px;top:32px;width:128px;height:21px;background:#424242;border-color:#5d5d5d"></div>
<div class="s" style="left:239px;top:37px;color:#e6e6e6">Normal</div>
<svg style="left:0;top:0" width="1" height="1">
<path d="M347 40.5 L351 44.5 L355 40.5" fill="none" stroke="#d0d0d0" stroke-width="1.1"/>
</svg>
<div class="s" style="left:372px;top:35px">Opacidad:</div>
<div class="inp" style="left:423px;top:32px;width:52px;height:17px"></div>
<div class="a" style="left:459px;top:33px;width:1px;height:15px;background:#616161"></div>
<div class="s" style="left:428px;top:35px;color:#e6e6e6">100%</div>
<div class="s" style="left:523px;top:35px">Flujo:</div>
<div class="inp" style="left:552px;top:32px;width:51px;height:17px"></div>
<div class="a" style="left:587px;top:33px;width:1px;height:15px;background:#616161"></div>
<div class="s" style="left:557px;top:35px;color:#e6e6e6">100%</div>
<div class="s" style="left:651px;top:35px">Suavizar:</div>
<div class="inp" style="left:696px;top:32px;width:52px;height:17px"></div>
<div class="a" style="left:732px;top:33px;width:1px;height:15px;background:#616161"></div>
<div class="s" style="left:701px;top:35px;color:#e6e6e6">0%</div>
<div class="inp" style="left:807px;top:32px;width:35px;height:17px;border-radius:1px"></div>
<div class="s" style="left:812px;top:35px;color:#e6e6e6">0°</div>
<svg style="left:0;top:0" width="1" height="1">
<path d="M464 40 L467.5 43.5 L471 40" fill="none" stroke="#d0d0d0" stroke-width="1"/>
<path d="M592 40 L595.5 43.5 L599 40" fill="none" stroke="#d0d0d0" stroke-width="1"/>
<path d="M737 40 L740.5 43.5 L744 40" fill="none" stroke="#d0d0d0" stroke-width="1"/>
<!-- airbrush icon 1 -->
<circle cx="494" cy="42.5" r="6.8" fill="none" stroke="#cfcfcf" stroke-width="1.4"/>
<circle cx="494" cy="42.5" r="5" fill="#7a7a7a"/>
<path d="M503.5 34 L504.5 35 L497 43.5 L495.5 42 Z" fill="#e0e0e0"/>
<rect x="514" y="30" width="1" height="23" fill="#3e3e3e"/>
<!-- pressure icon 2 -->
<path d="M620.5 35.5 C614.5 36.5 612 44.5 618 48.5" fill="none" stroke="#a6a6a6" stroke-width="2.6"/>
<path d="M631 34 C632.5 34.5 633 35.5 632.5 36.5 L626 44 L623.5 42 L629.5 35 C630 34.3 630.5 34 631 34Z" fill="#e2e2e2"/>
<path d="M623 42.5 L625.5 44.5 L624 47.5 L619.5 49 L621 45Z" fill="#e2e2e2"/>
<path d="M624.5 46 L629 49 M626 45 L630 47.5" stroke="#e2e2e2" stroke-width="1.1"/>
<rect x="642" y="30" width="1" height="23" fill="#3e3e3e"/>
<!-- gear -->
<g transform="translate(766 42)"><circle r="5.2" fill="#e0e0e0"/><g fill="#e0e0e0"><rect x="-1.6" y="-7.5" width="3.2" height="15"/><rect x="-7.5" y="-1.6" width="15" height="3.2"/><rect x="-1.6" y="-7.5" width="3.2" height="15" transform="rotate(45)"/><rect x="-1.6" y="-7.5" width="3.2" height="15" transform="rotate(-45)"/></g><circle r="2.2" fill="#535353"/></g>
<path d="M771 49 L775 49 L773 51 Z" fill="#e0e0e0"/>
<rect x="783" y="30" width="1" height="23" fill="#3e3e3e"/>
<!-- angle -->
<path d="M802 45.5 L789.5 45.5 L799 37" fill="none" stroke="#d6d6d6" stroke-width="1.2"/>
<path d="M795.5 40 Q798 42 797.5 45.5" fill="none" stroke="#d6d6d6" stroke-width="1"/>
<rect x="848" y="30" width="1" height="23" fill="#3e3e3e"/>
<!-- target pressure icon -->
<path d="M874 40.5 A7 7 0 1 1 867 35" fill="none" stroke="#d6d6d6" stroke-width="1.5"/>
<path d="M870.5 41.5 A3.8 3.8 0 1 1 866.5 38" fill="none" stroke="#d6d6d6" stroke-width="1.4"/>
<path d="M876 33 L877.5 34.5 L869 43 L867.5 41.5 Z" fill="#e0e0e0"/>
<!-- butterfly -->
<path d="M899 36 C896 33 891 33 891 35 C891 38 893 41 896 42 C893 43 892 46 893 48 C895 50 898 47 899 45" fill="none" stroke="#d6d6d6" stroke-width="1.3"/>
<path d="M901 36 C904 33 909 33 909 35 C909 38 907 41 904 42 C907 43 908 46 907 48 C905 50 902 47 901 45" fill="none" stroke="#d6d6d6" stroke-width="1.3"/>
<path d="M900 33 L900 51" stroke="#d6d6d6" stroke-width="1" stroke-dasharray="1 1"/>
<path d="M905 49.5 L908 49.5 L906.5 51 Z" fill="#e0e0e0"/>
<!-- search -->
<circle cx="1857" cy="40" r="5.7" fill="none" stroke="#e6e6e6" stroke-width="1.6"/>
<path d="M1861 44 L1865.5 48.5" stroke="#e6e6e6" stroke-width="1.8"/>
<!-- workspace -->
<rect x="1881.5" y="36.5" width="15" height="11" fill="none" stroke="#e6e6e6" stroke-width="1.2"/>
<rect x="1883.5" y="39" width="2" height="6" fill="#e6e6e6"/>
<path d="M1907 40 L1910 43 L1913 40" fill="none" stroke="#bdbdbd" stroke-width="1"/>
</svg>
<div class="t" style="left:51px;top:66px;font-size:11.3px;font-weight:700;color:#f2f2f2;letter-spacing:-0.1px">Sin título-1 al 37% (Capa 2, RGB/8) *</div>
<svg style="left:0;top:0" width="1" height="1">
<path d="M247 70 L253 76 M253 70 L247 76" stroke="#d0d0d0" stroke-width="0.9"/>
<!-- >> left -->
<path d="M6 62 L8.5 64.5 L6 67 M10 62 L12.5 64.5 L10 67" fill="none" stroke="#e8e8e8" stroke-width="1.5"/>
<!-- << right top -->
<path d="M1621 62 L1618.5 64.5 L1621 67 M1625 62 L1622.5 64.5 L1625 67" fill="none" stroke="#e8e8e8" stroke-width="1.5"/>
<path d="M1906 62 L1908.5 64.5 L1906 67 M1910 62 L1912.5 64.5 L1910 67" fill="none" stroke="#e8e8e8" stroke-width="1.5"/>
<!-- scroll arrows -->
<path d="M1581 100 L1584.5 96.5 L1588 100" fill="none" stroke="#a0a0a0" stroke-width="1"/>
<path d="M1581 1002 L1584.5 1005.5 L1588 1002" fill="none" stroke="#a0a0a0" stroke-width="1"/>
</svg>
<svg style="left:0;top:0" width="1" height="1">
<!-- grip -->
<g fill="#6d6d6d"><rect x="11" y="74" width="1" height="4"/><rect x="13" y="74" width="1" height="4"/><rect x="15" y="74" width="1" height="4"/><rect x="17" y="74" width="1" height="4"/><rect x="19" y="74" width="1" height="4"/><rect x="21" y="74" width="1" height="4"/><rect x="23" y="74" width="1" height="4"/><rect x="25" y="74" width="1" height="4"/><rect x="27" y="74" width="1" height="4"/></g>
<!-- selected brush bg -->
<rect x="4.5" y="296.5" width="30" height="23" rx="2" fill="#383838" stroke="#474747" stroke-width="1"/>
<g fill="#a8a8a8">
<path d="M32 105 L32 109 L28.5 109Z"/><path d="M32 130 L32 134 L28.5 134Z"/><path d="M32 157 L32 161 L28.5 161Z"/><path d="M32 183 L32 187 L28.5 187Z"/><path d="M32 210.5 L32 214 L28.5 214Z"/>
<path d="M32 261 L32 265 L28.5 265Z"/><path d="M32 287 L32 291 L28.5 291Z"/><path d="M32 314 L32 318 L28.5 318Z"/><path d="M32 340 L32 344 L28.5 344Z"/><path d="M32 366 L32 370 L28.5 370Z"/><path d="M32 392 L32 396 L28.5 396Z"/><path d="M32 418 L32 422 L28.5 422Z"/><path d="M32 444 L32 448 L28.5 448Z"/><path d="M32 470 L32 474 L28.5 474Z"/><path d="M32 496 L32 500 L28.5 500Z"/><path d="M32 522 L32 526 L28.5 526Z"/><path d="M32 548 L32 552 L28.5 552Z"/><path d="M32 574 L32 578 L28.5 578Z"/><path d="M32 600 L32 604 L28.5 604Z"/><path d="M32 652 L32 656 L28.5 656Z"/><path d="M32 759 L32 763 L28.5 763Z"/>
</g>
<g fill="#e2e2e2" stroke="#e2e2e2">
<!-- move -->
<path d="M19.5 93 V108 M12 100.5 H27" stroke-width="1.6" fill="none"/>
<path d="M19.5 92.5 L16.5 96 H22.5Z M19.5 108.5 L16.5 105 H22.5Z M11.5 100.5 L15 97.5 V103.5Z M27.5 100.5 L24 97.5 V103.5Z" stroke="none"/>
<!-- marquee -->
<rect x="12.5" y="119.5" width="15.5" height="12" fill="none" stroke-width="1.3" stroke-dasharray="3 2"/>
<!-- lasso -->
<ellipse cx="21" cy="151" rx="7.8" ry="5.2" fill="none" stroke-width="1.3" transform="rotate(-12 21 151)"/>
<path d="M14 155 C13 157 15 158 16.5 157.5 C17.5 158.5 17.5 160 16 160.5" fill="none" stroke-width="1.2"/>
<!-- wand -->
<path d="M13 185 L23 173" stroke-width="3.6" stroke-linecap="round" fill="none"/>
<path d="M19 169 v4 M17 171 h4 M27.5 168.5 v5 M25 171 h5 M28.5 176 v3 M27 177.5 h3" stroke-width="1.1" fill="none"/>
<!-- crop -->
<path d="M10 199 H13 M15 195 V208 H22 M17 199 H24 V212 M26 208 H29" fill="none" stroke-width="2"/>
<!-- frame -->
<rect x="13" y="223.5" width="15" height="12.5" fill="none" stroke-width="1.3"/>
<path d="M13 223.5 L28 236 M28 223.5 L13 236" stroke-width="1" fill="none"/>
<circle cx="13" cy="223.5" r="1.3" stroke="none"/><circle cx="28" cy="223.5" r="1.3" stroke="none"/><circle cx="13" cy="236" r="1.3" stroke="none"/><circle cx="28" cy="236" r="1.3" stroke="none"/>
<!-- eyedropper -->
<path d="M13.5 261 L21.5 253" stroke-width="3.5" fill="none" stroke-linecap="round"/>
<path d="M14.5 260 L20.8 253.7" stroke="#535353" stroke-width="1.2" fill="none"/>
<path d="M20 251 L25 256 L23.5 257.5 L18.5 252.5Z M22.5 252.5 L26 249 C27.5 248 28.5 249 28 250.5 L24.5 254Z" stroke-width="1"/>
<!-- healing -->
<g transform="rotate(-45 20 282)" stroke="none">
<rect x="10.6" y="278.1" width="5.1" height="7.8" rx="1"/>
<rect x="16.5" y="278.1" width="7" height="7.8"/>
<rect x="24.3" y="278.1" width="5.1" height="7.8" rx="1"/>
</g>
<g fill="#3a3a3a" stroke="none"><rect x="19" y="278.3" width="2" height="2"/><rect x="16.8" y="280.8" width="2" height="2"/><rect x="21.2" y="280.8" width="2" height="2"/><rect x="19" y="283.2" width="2" height="2"/></g>
<g stroke="none"><circle cx="11.5" cy="277.5" r="0.75"/><circle cx="11.5" cy="279.5" r="0.75"/><circle cx="12.5" cy="281.5" r="0.75"/><circle cx="12.5" cy="275.5" r="0.75"/><circle cx="14.5" cy="274.2" r="0.75"/><circle cx="16.5" cy="274.2" r="0.75"/><circle cx="18.5" cy="275.5" r="0.75"/></g>
<!-- brush -->
<path d="M26.5 301.5 C27.5 302 27 303 26 304 L20.5 310.5 L18.5 309 L24 303 C25 302 25.8 301.3 26.5 301.5 Z" stroke="none"/>
<path d="M18 309.8 L20 311.3 C19.5 314 17.5 316 12.5 316 C14 314.5 14 313.5 15 312 C15.8 310.5 17 310 18 309.8 Z" stroke="none"/>
<!-- stamp -->
<circle cx="20" cy="330" r="3.2" stroke="none"/>
<path d="M18.5 332 h3 v3 h5 v3.5 h-13 v-3.5 h5Z" stroke="none"/>
<rect x="14" y="340" width="13" height="1.4" stroke="none"/>
<!-- history brush -->
<path d="M27 353 C28 353.5 27.5 354.5 26.5 355.5 L21.5 361.5 L19.5 360 L24.5 354.5 C25.5 353.5 26.3 352.8 27 353 Z" stroke="none"/>
<path d="M19 361 L21 362.5 C20.5 365 18.5 367 14 367 C15.5 365.5 15.5 364.5 16.5 363 C17.3 361.5 18 361.2 19 361 Z" stroke="none"/>
<path d="M22 355.5 C19 354 16 355 14.5 357" fill="none" stroke-width="1.1"/>
<path d="M11 357 L15.5 354.5 L15.5 358.5Z" stroke="none"/>
<path d="M26.5 358 v1 M25.5 361 v1 M24 364 v1" stroke-width="1" fill="none"/>
<!-- eraser -->
<path d="M21 380.5 L27.5 386 L21.5 392.5 L13.5 392.5 L12.5 388 Z" fill="none" stroke-width="1.1"/>
<path d="M21 380.5 L27.5 386 L22 391.5 L16 386Z" stroke="none"/>
<path d="M21.5 392.5 H28" stroke-width="1.1" fill="none"/>
<!-- bucket -->
<path d="M12.5 410 L18.5 404 L25 410.5 L19 416.5Z" fill="none" stroke-width="1.2"/>
<path d="M16.5 407 C15 402 19 402 20 405" fill="none" stroke-width="1"/>
<circle cx="20.5" cy="410" r="1.3" stroke="none"/>
<path d="M27.5 411 C28.5 413 29 414.5 27.5 415.5 C26 415.5 25.5 414 27.5 411Z" stroke="none"/>
<!-- smudge -->
<path d="M17 438 C14 436 14 432 18 431 C22 430 27 432 27 436 C27 439 24 442 21 442 C19.5 443 17 446 15 446.5 L14 445.5 C16 443 18.5 440 17 438Z" stroke="none"/>
<path d="M19.5 437 L15.5 443" stroke="#535353" stroke-width="1" fill="none"/>
<!-- dodge -->
<circle cx="21.5" cy="461" r="5" stroke="none"/>
<path d="M18 465 L12.5 471" stroke-width="1.5" fill="none"/>
<!-- pen -->
<path d="M13.5 497.5 C13 494 14.5 489 19.5 486.5 L24 491 C21.5 496 17 497.5 13.5 497.5Z" fill="none" stroke-width="1.1"/>
<path d="M20 485.5 L23.5 482.5 L28 487 L25 490.5Z" stroke="none"/>
<path d="M14 497 L18.5 492.5" stroke-width="0.9" fill="none"/>
<circle cx="19" cy="492" r="0.9" stroke="none"/>
<!-- type -->
<path d="M15.5 509.5 H26.5 V512 M15.5 509.5 V512 M21 509.5 V522.5 M18 522.5 H24" fill="none" stroke-width="1.7"/>
<!-- path select arrow -->
<path d="M16.5 534.5 L25.5 544 L21.5 544 L23.5 549 L21.5 550 L19.5 545 L16.5 547.5Z" fill="#1a1a1a" stroke-width="1"/>
<!-- ellipse -->
<ellipse cx="19.2" cy="567.5" rx="7.2" ry="6.2" fill="#6e6e6e" stroke-width="1"/>
<!-- hand rotate -->
<path d="M14 588 C17 584 23 584 26 587" fill="none" stroke-width="1.1"/>
<path d="M24.5 585 L29 587.5 L24.5 589Z" stroke="none"/>
<path d="M22 589 L28.5 595.5 L22 601Z" stroke="none"/>
<path d="M13 595 C14 594 15 595 16 596 V590.5 C16 589.5 17.5 589.5 17.5 590.5 V594 V589.5 C17.5 588.5 19 588.5 19 589.5 V594 V590 C19 589 20.5 589 20.5 590 V595 V591.5 C20.5 590.5 22 590.5 22 591.5 V597 C22 600 20 601.5 17.5 601.5 C15 601.5 14 599 13 595Z" stroke="#535353" stroke-width="0.6"/>
<!-- zoom -->
<circle cx="19.5" cy="618" r="5.3" fill="none" stroke-width="1.5"/>
<path d="M23.3 621.8 L28 626.8" stroke-width="1.8" fill="none"/>
<!-- more -->
<circle cx="13.5" cy="646" r="1.6" stroke="none"/><circle cx="19.8" cy="646" r="1.6" stroke="none"/><circle cx="26" cy="646" r="1.6" stroke="none"/>
<!-- default colors -->
<rect x="8.5" y="668.5" width="6" height="6" stroke="none"/>
<rect x="5.5" y="665.5" width="6" height="6" fill="#111" stroke-width="1"/>
<!-- swap -->
<path d="M23.5 665.5 L23.5 669.5 H29.5 V673" fill="none" stroke-width="1.1"/>
<path d="M21.5 667.5 L23.5 664.5 L25.5 667.5Z M27.5 672 L29.5 675 L31.5 672Z" stroke="none"/>
</g>
<!-- fg / bg -->
<rect x="14.5" y="690.5" width="19" height="19" fill="#fff" stroke="#3a3a3a" stroke-width="1"/>
<rect x="4.5" y="680.5" width="19" height="19" fill="#000" stroke="#3a3a3a" stroke-width="1"/>
<rect x="5.5" y="681.5" width="17" height="17" fill="#000" stroke="#fff" stroke-width="1"/>
<!-- quick mask -->
<rect x="11.5" y="721.5" width="17" height="12" fill="none" stroke="#e2e2e2" stroke-width="1.1"/>
<circle cx="20" cy="727.5" r="3.8" fill="none" stroke="#e2e2e2" stroke-width="1" stroke-dasharray="1 1.2"/>
<!-- screen mode -->
<rect x="11.5" y="751.5" width="11" height="8" fill="#535353" stroke="#e2e2e2" stroke-width="1.1"/>
<rect x="16.5" y="747.5" width="11" height="8" fill="#535353" stroke="#e2e2e2" stroke-width="1.1"/>
</svg>
<svg width="1919" height="1078" style="left:0;top:0;position:absolute">
<path d="M840.6,303.7 C837.3,306.3 826.5,313.9 820.7,319.5 C814.9,325.1 811.2,330.1 805.8,337.0 C800.4,343.9 794.1,353.4 788.2,361.2 C782.3,368.9 773.3,378.0 770.6,383.5 C767.9,389.0 771.2,388.9 772.2,394.0 C773.2,399.1 774.9,408.0 776.8,414.3 C778.6,420.6 781.4,426.4 783.3,432.0 C785.2,437.6 787.0,442.5 788.0,447.7 C789.0,452.9 789.2,460.4 789.5,463.0 L790,466 L806,468  L809.0,469.0 C808.6,468.1 807.1,465.4 806.5,463.5 C805.9,461.6 804.9,459.1 805.1,457.5 C805.3,455.9 807.6,455.3 807.5,454.2 C807.4,453.1 804.7,452.2 804.5,450.8 C804.3,449.4 807.4,449.1 806.5,445.5 C805.6,441.9 800.6,434.0 799.0,429.0 C797.4,424.0 796.8,420.4 796.8,415.3 C796.8,410.2 797.0,404.2 799.0,398.6 C801.0,393.0 805.0,388.0 808.6,381.5 C812.2,375.0 816.8,367.9 820.7,359.4 C824.6,350.9 828.5,339.9 831.8,330.6 C835.1,321.3 839.1,308.2 840.6,303.7 Z" fill="#fff" stroke="#000" stroke-width="2.4" stroke-linejoin="round"/>
<path d="M838.3,308.3 C836.6,312.4 831.4,325.1 828.0,333.0 C824.6,340.9 821.7,349.4 817.9,355.7 C814.1,362.0 809.8,366.4 805.0,371.0 C800.2,375.6 792.1,379.0 789.0,383.0 C785.9,387.0 786.8,390.9 786.5,395.0 C786.2,399.1 786.1,402.6 787.0,407.8 C787.9,413.0 789.8,420.2 791.7,426.4 C793.6,432.6 796.7,438.8 798.2,445.0 C799.8,451.2 800.5,460.4 801.0,463.5" fill="none" stroke="#000" stroke-width="0.9"/>
<path d="M828.9,316.0 Q829.5,309.9 836.5,312.0 Q832.7,315.9 828.9,316.0Z" fill="#000"/>
<path d="M821.1,323.5 Q823.6,314.6 833.3,319.5 Q825.7,321.0 821.1,323.5Z" fill="#000"/>
<path d="M814.3,331.5 Q818.5,321.8 830.0,327.5 Q820.2,328.3 814.3,331.5Z" fill="#000"/>
<path d="M807.8,339.5 Q813.6,329.7 826.6,335.5 Q815.0,336.3 807.8,339.5Z" fill="#000"/>
<path d="M802.0,347.5 Q808.8,337.6 823.0,343.5 Q810.1,344.3 802.0,347.5Z" fill="#000"/>
<path d="M796.1,355.5 Q804.1,345.6 819.5,351.5 Q805.2,352.3 796.1,355.5Z" fill="#000"/>
<path d="M790.2,363.5 Q798.5,353.6 814.4,359.5 Q799.6,360.3 790.2,363.5Z" fill="#000"/>
<path d="M783.9,371.5 Q792.0,361.6 807.7,367.5 Q793.1,368.3 783.9,371.5Z" fill="#000"/>
<path d="M777.6,379.5 Q784.5,369.6 798.7,375.5 Q785.7,376.3 777.6,379.5Z" fill="#000"/>
<path d="M774.4,387.0 Q778.0,377.2 789.4,382.5 Q779.7,382.7 774.4,387.0Z" fill="#000"/>
<path d="M775.7,395.0 Q777.6,386.4 787.1,390.5 Q779.7,391.7 775.7,395.0Z" fill="#000"/>
<path d="M777.2,401.5 Q778.1,394.3 786.3,397.0 Q780.7,399.4 777.2,401.5Z" fill="#000"/>
<path d="M778.7,408.0 Q779.1,401.5 786.5,403.5 Q782.0,406.5 778.7,408.0Z" fill="#000"/>
<path d="M780.2,414.5 Q780.3,408.5 787.3,410.0 Q783.4,413.3 780.2,414.5Z" fill="#000"/>
<path d="M782.6,421.0 Q782.4,415.4 788.9,416.5 Q785.8,420.1 782.6,421.0Z" fill="#000"/>
<path d="M784.8,427.0 Q784.3,421.8 790.4,422.5 Q787.9,426.3 784.8,427.0Z" fill="#000"/>
<path d="M786.6,433.0 Q786.5,428.0 792.3,429.0 Q788.5,430.9 786.6,433.0Z" fill="#000"/>
<path d="M788.2,438.5 Q788.2,433.3 794.2,434.5 Q790.2,436.3 788.2,438.5Z" fill="#000"/>
<path d="M789.7,443.5 Q789.8,438.2 796.0,439.5 Q791.8,441.2 789.7,443.5Z" fill="#000"/>
<path d="M791.0,448.0 Q791.2,442.5 797.6,444.0 Q793.1,445.6 791.0,448.0Z" fill="#000"/>
<path d="M791.5,452.5 Q791.9,446.7 798.4,448.5 Q793.6,449.8 791.5,452.5Z" fill="#000"/>
<path d="M791.9,456.5 Q792.3,450.6 799.0,452.5 Q794.1,453.7 791.9,456.5Z" fill="#000"/>
<path d="M792.3,460.5 Q792.8,454.5 799.6,456.5 Q794.5,457.6 792.3,460.5Z" fill="#000"/>
<path d="M779.5,465 C781,463.5 786,463 794,464.3 C801,466 806,468.5 810.5,471.5 C812,473 811.5,476 809,476 C803,473.5 797,471 790,470 C785,469.5 781,469.5 779.8,468.5 C778.8,467.5 778.8,466 779.5,465 Z" fill="#fff" stroke="#000" stroke-width="2.2" stroke-linejoin="round"/>
<path d="M781.5,466.8 C790,466.5 800,469.5 808.5,473.8" fill="none" stroke="#000" stroke-width="0.9"/>
<path d="M784.5,469.5 C784,480 783.5,490 781.5,502 C780,509 778,514 776,518.5 L791.5,521 C792.5,514 794,507 796,499 C798,490 801,482 803,475 Z" fill="#fff" stroke="#000" stroke-width="2.4" stroke-linejoin="round"/>
<path d="M769,521 C771,518.5 775,517.5 779,518 C785,518.5 790,519.5 793.5,522 C795,523.5 795,525.5 793.5,527 C790,530 786,531.5 781,531 C777,530.5 774,529.5 772,527.5 C769.5,525.5 768.5,523 769,521 Z" fill="#fff" stroke="#000" stroke-width="2.2" stroke-linejoin="round"/>
<path d="M772.5,521.5 L775,527.5 M775.5,520.5 L777.5,528.5 M788,521 L786.5,529 M791,522.5 L789.5,528" stroke="#000" stroke-width="1"/>
<path d="M774,529.5 L787.5,531.5 L786,538 C782,539 777,538.5 774,537 Z" fill="#fff" stroke="#000" stroke-width="2.2" stroke-linejoin="round"/>
<path d="M775,532 L786.5,533.5 M775,534.5 L786.3,536" stroke="#000" stroke-width="0.9"/>
<g transform="translate(1930,0) scale(-1,1)"><path d="M840.6,303.7 C837.3,306.3 826.5,313.9 820.7,319.5 C814.9,325.1 811.2,330.1 805.8,337.0 C800.4,343.9 794.1,353.4 788.2,361.2 C782.3,368.9 773.3,378.0 770.6,383.5 C767.9,389.0 771.2,388.9 772.2,394.0 C773.2,399.1 774.9,408.0 776.8,414.3 C778.6,420.6 781.4,426.4 783.3,432.0 C785.2,437.6 787.0,442.5 788.0,447.7 C789.0,452.9 789.2,460.4 789.5,463.0 L790,466 L806,468  L809.0,469.0 C808.6,468.1 807.1,465.4 806.5,463.5 C805.9,461.6 804.9,459.1 805.1,457.5 C805.3,455.9 807.6,455.3 807.5,454.2 C807.4,453.1 804.7,452.2 804.5,450.8 C804.3,449.4 807.4,449.1 806.5,445.5 C805.6,441.9 800.6,434.0 799.0,429.0 C797.4,424.0 796.8,420.4 796.8,415.3 C796.8,410.2 797.0,404.2 799.0,398.6 C801.0,393.0 805.0,388.0 808.6,381.5 C812.2,375.0 816.8,367.9 820.7,359.4 C824.6,350.9 828.5,339.9 831.8,330.6 C835.1,321.3 839.1,308.2 840.6,303.7 Z" fill="#fff" stroke="#000" stroke-width="2.4" stroke-linejoin="round"/>
<path d="M838.3,308.3 C836.6,312.4 831.4,325.1 828.0,333.0 C824.6,340.9 821.7,349.4 817.9,355.7 C814.1,362.0 809.8,366.4 805.0,371.0 C800.2,375.6 792.1,379.0 789.0,383.0 C785.9,387.0 786.8,390.9 786.5,395.0 C786.2,399.1 786.1,402.6 787.0,407.8 C787.9,413.0 789.8,420.2 791.7,426.4 C793.6,432.6 796.7,438.8 798.2,445.0 C799.8,451.2 800.5,460.4 801.0,463.5" fill="none" stroke="#000" stroke-width="0.9"/>
<path d="M828.9,316.0 Q829.5,309.9 836.5,312.0 Q832.7,315.9 828.9,316.0Z" fill="#000"/>
<path d="M821.1,323.5 Q823.6,314.6 833.3,319.5 Q825.7,321.0 821.1,323.5Z" fill="#000"/>
<path d="M814.3,331.5 Q818.5,321.8 830.0,327.5 Q820.2,328.3 814.3,331.5Z" fill="#000"/>
<path d="M807.8,339.5 Q813.6,329.7 826.6,335.5 Q815.0,336.3 807.8,339.5Z" fill="#000"/>
<path d="M802.0,347.5 Q808.8,337.6 823.0,343.5 Q810.1,344.3 802.0,347.5Z" fill="#000"/>
<path d="M796.1,355.5 Q804.1,345.6 819.5,351.5 Q805.2,352.3 796.1,355.5Z" fill="#000"/>
<path d="M790.2,363.5 Q798.5,353.6 814.4,359.5 Q799.6,360.3 790.2,363.5Z" fill="#000"/>
<path d="M783.9,371.5 Q792.0,361.6 807.7,367.5 Q793.1,368.3 783.9,371.5Z" fill="#000"/>
<path d="M777.6,379.5 Q784.5,369.6 798.7,375.5 Q785.7,376.3 777.6,379.5Z" fill="#000"/>
<path d="M774.4,387.0 Q778.0,377.2 789.4,382.5 Q779.7,382.7 774.4,387.0Z" fill="#000"/>
<path d="M775.7,395.0 Q777.6,386.4 787.1,390.5 Q779.7,391.7 775.7,395.0Z" fill="#000"/>
<path d="M777.2,401.5 Q778.1,394.3 786.3,397.0 Q780.7,399.4 777.2,401.5Z" fill="#000"/>
<path d="M778.7,408.0 Q779.1,401.5 786.5,403.5 Q782.0,406.5 778.7,408.0Z" fill="#000"/>
<path d="M780.2,414.5 Q780.3,408.5 787.3,410.0 Q783.4,413.3 780.2,414.5Z" fill="#000"/>
<path d="M782.6,421.0 Q782.4,415.4 788.9,416.5 Q785.8,420.1 782.6,421.0Z" fill="#000"/>
<path d="M784.8,427.0 Q784.3,421.8 790.4,422.5 Q787.9,426.3 784.8,427.0Z" fill="#000"/>
<path d="M786.6,433.0 Q786.5,428.0 792.3,429.0 Q788.5,430.9 786.6,433.0Z" fill="#000"/>
<path d="M788.2,438.5 Q788.2,433.3 794.2,434.5 Q790.2,436.3 788.2,438.5Z" fill="#000"/>
<path d="M789.7,443.5 Q789.8,438.2 796.0,439.5 Q791.8,441.2 789.7,443.5Z" fill="#000"/>
<path d="M791.0,448.0 Q791.2,442.5 797.6,444.0 Q793.1,445.6 791.0,448.0Z" fill="#000"/>
<path d="M791.5,452.5 Q791.9,446.7 798.4,448.5 Q793.6,449.8 791.5,452.5Z" fill="#000"/>
<path d="M791.9,456.5 Q792.3,450.6 799.0,452.5 Q794.1,453.7 791.9,456.5Z" fill="#000"/>
<path d="M792.3,460.5 Q792.8,454.5 799.6,456.5 Q794.5,457.6 792.3,460.5Z" fill="#000"/>
<path d="M779.5,465 C781,463.5 786,463 794,464.3 C801,466 806,468.5 810.5,471.5 C812,473 811.5,476 809,476 C803,473.5 797,471 790,470 C785,469.5 781,469.5 779.8,468.5 C778.8,467.5 778.8,466 779.5,465 Z" fill="#fff" stroke="#000" stroke-width="2.2" stroke-linejoin="round"/>
<path d="M781.5,466.8 C790,466.5 800,469.5 808.5,473.8" fill="none" stroke="#000" stroke-width="0.9"/>
<path d="M784.5,469.5 C784,480 783.5,490 781.5,502 C780,509 778,514 776,518.5 L791.5,521 C792.5,514 794,507 796,499 C798,490 801,482 803,475 Z" fill="#fff" stroke="#000" stroke-width="2.4" stroke-linejoin="round"/>
<path d="M769,521 C771,518.5 775,517.5 779,518 C785,518.5 790,519.5 793.5,522 C795,523.5 795,525.5 793.5,527 C790,530 786,531.5 781,531 C777,530.5 774,529.5 772,527.5 C769.5,525.5 768.5,523 769,521 Z" fill="#fff" stroke="#000" stroke-width="2.2" stroke-linejoin="round"/>
<path d="M772.5,521.5 L775,527.5 M775.5,520.5 L777.5,528.5 M788,521 L786.5,529 M791,522.5 L789.5,528" stroke="#000" stroke-width="1"/>
<path d="M774,529.5 L787.5,531.5 L786,538 C782,539 777,538.5 774,537 Z" fill="#fff" stroke="#000" stroke-width="2.2" stroke-linejoin="round"/>
<path d="M775,532 L786.5,533.5 M775,534.5 L786.3,536" stroke="#000" stroke-width="0.9"/></g>
<path d="M953.9,550 C958,547 964,545.5 971.7,545 C979,545.5 985,547.5 989.5,552.3 C994,556 998,566 999.5,577.8 C1000,590 996,603 990,612 C985,620 979,628 972.8,633.5 C966,628 960,620 955,612 C949,603 945,593 945,582 C945,568 948,557 953.9,550 Z" fill="#fff" stroke="#000" stroke-width="1.2"/>
<path d="M887.0,498.8 C886.9,500.4 885.7,504.5 886.5,508.6 C887.3,512.7 889.2,518.3 892.0,523.4 C894.8,528.5 899.8,534.3 903.2,539.2 C906.6,544.1 909.7,548.5 912.5,553.0 C915.3,557.5 917.4,562.1 920.0,566.0 C922.6,569.9 925.0,573.7 928.2,576.3 C931.4,578.9 936.3,580.6 939.4,581.8 C942.5,583.0 945.7,583.4 947.0,583.7 L954,550 L954.2,547.5 C952.3,546.4 947.0,542.9 943.0,541.0 C939.0,539.1 934.9,539.0 930.0,536.4 C925.1,533.8 918.2,528.7 913.4,525.3 C908.6,521.9 905.7,520.4 901.3,516.0 C896.9,511.6 889.4,501.7 887.0,498.8Z" fill="#fff"/>
<path d="M887.0,498.8 C886.9,500.4 885.7,504.5 886.5,508.6 C887.3,512.7 889.2,518.3 892.0,523.4 C894.8,528.5 899.8,534.3 903.2,539.2 C906.6,544.1 909.7,548.5 912.5,553.0 C915.3,557.5 917.4,562.1 920.0,566.0 C922.6,569.9 925.0,573.7 928.2,576.3 C931.4,578.9 936.3,580.6 939.4,581.8 C942.5,583.0 945.7,583.4 947.0,583.7 L954.2,550.3 C953.0,552.6 948.9,561.1 947.0,564.2 C945.1,567.3 945.5,568.3 943.0,568.8 C940.5,569.3 935.4,568.7 932.0,567.0 C928.6,565.3 925.7,561.4 922.7,558.6 C919.8,555.8 917.1,553.5 914.3,550.3 C911.5,547.1 908.9,543.8 906.0,539.2 C903.1,534.6 899.2,528.2 896.7,522.5 C894.2,516.8 892.6,508.8 891.0,504.8 C889.4,500.9 887.7,499.8 887.0,498.8Z" fill="#000" stroke="#000" stroke-width="0.8" stroke-linejoin="round"/>
<path d="M887.0,498.8 C889.4,501.7 896.9,511.6 901.3,516.0 C905.7,520.4 908.6,521.9 913.4,525.3 C918.2,528.7 925.1,533.8 930.0,536.4 C934.9,539.0 939.0,539.1 943.0,541.0 C947.0,542.9 952.3,546.4 954.2,547.5" fill="none" stroke="#000" stroke-width="1"/>
<path d="M896.7,522.5 C898.4,524.2 903.6,529.8 907.0,533.0 C910.4,536.2 912.8,539.0 917.0,542.0 C921.2,545.0 927.0,548.9 932.0,551.2 C937.0,553.5 944.3,555.1 946.8,555.9" fill="none" stroke="#000" stroke-width="1"/>
<path d="M875.1,665.0 C878.1,662.1 887.1,653.3 893.2,647.4 C899.3,641.5 907.1,635.0 911.7,629.7 C916.3,624.4 917.5,620.3 921.0,615.8 C924.5,611.3 929.1,606.4 933.0,602.8 C936.9,599.2 942.3,595.5 944.2,594.0 L952.6,612 L953.0,610.0 C952.9,611.2 952.9,613.5 952.4,617.0 C951.9,620.5 951.6,627.3 950.2,630.7 C948.8,634.1 948.3,634.6 944.2,637.2 C940.1,639.8 932.7,642.9 925.7,646.4 C918.8,649.9 909.5,655.0 902.5,658.5 C895.5,662.0 888.5,666.2 883.9,667.3 C879.3,668.4 876.6,665.4 875.1,665.0Z" fill="#fff"/>
<path d="M875.1,665.0 C878.1,662.1 887.1,653.3 893.2,647.4 C899.3,641.5 907.1,635.0 911.7,629.7 C916.3,624.4 917.5,620.3 921.0,615.8 C924.5,611.3 929.1,606.4 933.0,602.8 C936.9,599.2 942.3,595.5 944.2,594.0 L944.2,594.0 C943.6,594.7 943.3,594.4 940.5,598.2 C937.7,602.0 930.0,611.8 927.5,616.7 C925.0,621.7 929.1,623.6 925.7,627.9 C922.3,632.2 913.6,637.2 907.1,642.7 C900.6,648.2 891.2,657.6 886.7,661.0 C882.2,664.4 881.1,662.7 880.0,663.0Z" fill="#000" stroke="#000" stroke-width="0.8" stroke-linejoin="round"/>
<path d="M875.1,665.0 C876.6,665.4 879.3,668.4 883.9,667.3 C888.5,666.2 895.5,662.0 902.5,658.5 C909.5,655.0 918.8,649.9 925.7,646.4 C932.7,642.9 940.1,639.8 944.2,637.2 C948.3,634.6 948.8,634.1 950.2,630.7 C951.6,627.3 951.9,620.5 952.4,617.0 C952.9,613.5 952.9,611.2 953.0,610.0 L952.4,610.0 C952.0,611.2 950.6,613.9 949.8,617.0 C949.0,620.1 948.8,625.6 947.6,628.5 C946.4,631.4 946.1,632.0 942.5,634.5 C938.9,637.0 932.4,640.0 925.7,643.5 C919.0,647.0 910.1,652.0 902.5,655.5 C894.9,659.0 883.8,663.0 880.0,664.5Z" fill="#000" stroke="#000" stroke-width="0.8" stroke-linejoin="round"/>
<path d="M904.3,656.6 C905.2,655.5 906.9,652.0 909.9,650.1 C912.9,648.2 917.5,648.3 922.0,645.5 C926.5,642.7 934.3,637.4 936.8,633.4 C939.3,629.4 936.2,625.7 936.8,621.4 C937.4,617.1 939.0,611.2 940.5,607.5 C942.0,603.8 945.1,600.5 946.0,599.1" fill="none" stroke="#000" stroke-width="0.9"/>
<path d="M953.5,550.5 C947,556 945,566 945,582 C945,596 950,608 958,618 C963,625 968,630 972.8,633.5 L973.2,631 C967,625 962,618 958.5,612 C953,603 948.8,594 948.6,582 C948.5,568 950,558 955.5,551.5 Z" fill="#000"/>
<path d="M971.75,478.3 C969.5,479 968.5,484 966,492 C962,506 957,526 952.4,546.5" fill="none" stroke="#000" stroke-width="1.1"/>
<path d="M971.75,481.5 C970.5,483 969.5,488 968,494 C964.5,508 960.5,526 955.3,546.5" fill="none" stroke="#000" stroke-width="0.8"/>
<path d="M965.3,506 L964.8,521 M963.8,534 L963.5,545" fill="none" stroke="#000" stroke-width="0.9"/>
<path d="M952,561.5 C955.5,562.5 959,564 962,567 C965,570 965.8,575 966,579 C966.3,583 967,586 968.5,588" fill="none" stroke="#000" stroke-width="1.5"/>
<path d="M952,561.5 L956,564.5 L953,563.5Z" fill="#000"/>
<path d="M961.5,572.5 C962.5,577 963,582 964,586 C965,589 966.5,590.5 968,591" fill="none" stroke="#000" stroke-width="0.9"/>
<path d="M948.4,562.5 C951,565 952.5,569 951.8,574 C951,577 949.5,579 947.9,580.5" fill="none" stroke="#000" stroke-width="0.9"/>
<path d="M951.8,573.5 C955,574.5 958.5,574 960.8,572.5" fill="none" stroke="#000" stroke-width="0.9"/>
<path d="M954.5,574.2 C955,577 954.5,580 953.5,582" fill="none" stroke="#000" stroke-width="0.8"/>
<path d="M956.5,592 C960,596 966,602 967.5,607 C963,606 958,600 956.5,592 Z" fill="none" stroke="#000" stroke-width="0.9"/>
<path d="M951,598 C955,604 959,612 961,622 M957,612 C960,616 962,620 963,625" fill="none" stroke="#000" stroke-width="0.9"/>
<path d="M966,593 C967,606 968,618 970,630" fill="none" stroke="#000" stroke-width="0.9"/>
<path d="M931,583 C929.5,587 933,589 937,588.5 C942,588 946,585 950,583.2 C954,581.8 957,583 960,585.5 C963,588 965.5,590.5 968.5,591.5" fill="none" stroke="#000" stroke-width="3.6" stroke-linecap="round"/>
<path d="M931,583 C929.5,587 933,589 937,588.5 C942,588 946,585 950,583.2 C954,581.8 957,583 960,585.5 C963,588 965.5,590.5 968.5,591.5" fill="none" stroke="#fff" stroke-width="1.7" stroke-linecap="round"/>
<path d="M956.2,589.5 C958,593 959.5,597 961,601" fill="none" stroke="#000" stroke-width="0.9"/>
<g transform="translate(1943.5,0) scale(-1,1)"><path d="M887.0,498.8 C886.9,500.4 885.7,504.5 886.5,508.6 C887.3,512.7 889.2,518.3 892.0,523.4 C894.8,528.5 899.8,534.3 903.2,539.2 C906.6,544.1 909.7,548.5 912.5,553.0 C915.3,557.5 917.4,562.1 920.0,566.0 C922.6,569.9 925.0,573.7 928.2,576.3 C931.4,578.9 936.3,580.6 939.4,581.8 C942.5,583.0 945.7,583.4 947.0,583.7 L954,550 L954.2,547.5 C952.3,546.4 947.0,542.9 943.0,541.0 C939.0,539.1 934.9,539.0 930.0,536.4 C925.1,533.8 918.2,528.7 913.4,525.3 C908.6,521.9 905.7,520.4 901.3,516.0 C896.9,511.6 889.4,501.7 887.0,498.8Z" fill="#fff"/>
<path d="M887.0,498.8 C886.9,500.4 885.7,504.5 886.5,508.6 C887.3,512.7 889.2,518.3 892.0,523.4 C894.8,528.5 899.8,534.3 903.2,539.2 C906.6,544.1 909.7,548.5 912.5,553.0 C915.3,557.5 917.4,562.1 920.0,566.0 C922.6,569.9 925.0,573.7 928.2,576.3 C931.4,578.9 936.3,580.6 939.4,581.8 C942.5,583.0 945.7,583.4 947.0,583.7 L954.2,550.3 C953.0,552.6 948.9,561.1 947.0,564.2 C945.1,567.3 945.5,568.3 943.0,568.8 C940.5,569.3 935.4,568.7 932.0,567.0 C928.6,565.3 925.7,561.4 922.7,558.6 C919.8,555.8 917.1,553.5 914.3,550.3 C911.5,547.1 908.9,543.8 906.0,539.2 C903.1,534.6 899.2,528.2 896.7,522.5 C894.2,516.8 892.6,508.8 891.0,504.8 C889.4,500.9 887.7,499.8 887.0,498.8Z" fill="#000" stroke="#000" stroke-width="0.8" stroke-linejoin="round"/>
<path d="M887.0,498.8 C889.4,501.7 896.9,511.6 901.3,516.0 C905.7,520.4 908.6,521.9 913.4,525.3 C918.2,528.7 925.1,533.8 930.0,536.4 C934.9,539.0 939.0,539.1 943.0,541.0 C947.0,542.9 952.3,546.4 954.2,547.5" fill="none" stroke="#000" stroke-width="1"/>
<path d="M896.7,522.5 C898.4,524.2 903.6,529.8 907.0,533.0 C910.4,536.2 912.8,539.0 917.0,542.0 C921.2,545.0 927.0,548.9 932.0,551.2 C937.0,553.5 944.3,555.1 946.8,555.9" fill="none" stroke="#000" stroke-width="1"/>
<path d="M875.1,665.0 C878.1,662.1 887.1,653.3 893.2,647.4 C899.3,641.5 907.1,635.0 911.7,629.7 C916.3,624.4 917.5,620.3 921.0,615.8 C924.5,611.3 929.1,606.4 933.0,602.8 C936.9,599.2 942.3,595.5 944.2,594.0 L952.6,612 L953.0,610.0 C952.9,611.2 952.9,613.5 952.4,617.0 C951.9,620.5 951.6,627.3 950.2,630.7 C948.8,634.1 948.3,634.6 944.2,637.2 C940.1,639.8 932.7,642.9 925.7,646.4 C918.8,649.9 909.5,655.0 902.5,658.5 C895.5,662.0 888.5,666.2 883.9,667.3 C879.3,668.4 876.6,665.4 875.1,665.0Z" fill="#fff"/>
<path d="M875.1,665.0 C878.1,662.1 887.1,653.3 893.2,647.4 C899.3,641.5 907.1,635.0 911.7,629.7 C916.3,624.4 917.5,620.3 921.0,615.8 C924.5,611.3 929.1,606.4 933.0,602.8 C936.9,599.2 942.3,595.5 944.2,594.0 L944.2,594.0 C943.6,594.7 943.3,594.4 940.5,598.2 C937.7,602.0 930.0,611.8 927.5,616.7 C925.0,621.7 929.1,623.6 925.7,627.9 C922.3,632.2 913.6,637.2 907.1,642.7 C900.6,648.2 891.2,657.6 886.7,661.0 C882.2,664.4 881.1,662.7 880.0,663.0Z" fill="#000" stroke="#000" stroke-width="0.8" stroke-linejoin="round"/>
<path d="M875.1,665.0 C876.6,665.4 879.3,668.4 883.9,667.3 C888.5,666.2 895.5,662.0 902.5,658.5 C909.5,655.0 918.8,649.9 925.7,646.4 C932.7,642.9 940.1,639.8 944.2,637.2 C948.3,634.6 948.8,634.1 950.2,630.7 C951.6,627.3 951.9,620.5 952.4,617.0 C952.9,613.5 952.9,611.2 953.0,610.0 L952.4,610.0 C952.0,611.2 950.6,613.9 949.8,617.0 C949.0,620.1 948.8,625.6 947.6,628.5 C946.4,631.4 946.1,632.0 942.5,634.5 C938.9,637.0 932.4,640.0 925.7,643.5 C919.0,647.0 910.1,652.0 902.5,655.5 C894.9,659.0 883.8,663.0 880.0,664.5Z" fill="#000" stroke="#000" stroke-width="0.8" stroke-linejoin="round"/>
<path d="M904.3,656.6 C905.2,655.5 906.9,652.0 909.9,650.1 C912.9,648.2 917.5,648.3 922.0,645.5 C926.5,642.7 934.3,637.4 936.8,633.4 C939.3,629.4 936.2,625.7 936.8,621.4 C937.4,617.1 939.0,611.2 940.5,607.5 C942.0,603.8 945.1,600.5 946.0,599.1" fill="none" stroke="#000" stroke-width="0.9"/>
<path d="M953.5,550.5 C947,556 945,566 945,582 C945,596 950,608 958,618 C963,625 968,630 972.8,633.5 L973.2,631 C967,625 962,618 958.5,612 C953,603 948.8,594 948.6,582 C948.5,568 950,558 955.5,551.5 Z" fill="#000"/>
<path d="M971.75,478.3 C969.5,479 968.5,484 966,492 C962,506 957,526 952.4,546.5" fill="none" stroke="#000" stroke-width="1.1"/>
<path d="M971.75,481.5 C970.5,483 969.5,488 968,494 C964.5,508 960.5,526 955.3,546.5" fill="none" stroke="#000" stroke-width="0.8"/>
<path d="M965.3,506 L964.8,521 M963.8,534 L963.5,545" fill="none" stroke="#000" stroke-width="0.9"/>
<path d="M952,561.5 C955.5,562.5 959,564 962,567 C965,570 965.8,575 966,579 C966.3,583 967,586 968.5,588" fill="none" stroke="#000" stroke-width="1.5"/>
<path d="M952,561.5 L956,564.5 L953,563.5Z" fill="#000"/>
<path d="M961.5,572.5 C962.5,577 963,582 964,586 C965,589 966.5,590.5 968,591" fill="none" stroke="#000" stroke-width="0.9"/>
<path d="M948.4,562.5 C951,565 952.5,569 951.8,574 C951,577 949.5,579 947.9,580.5" fill="none" stroke="#000" stroke-width="0.9"/>
<path d="M951.8,573.5 C955,574.5 958.5,574 960.8,572.5" fill="none" stroke="#000" stroke-width="0.9"/>
<path d="M954.5,574.2 C955,577 954.5,580 953.5,582" fill="none" stroke="#000" stroke-width="0.8"/>
<path d="M956.5,592 C960,596 966,602 967.5,607 C963,606 958,600 956.5,592 Z" fill="none" stroke="#000" stroke-width="0.9"/>
<path d="M951,598 C955,604 959,612 961,622 M957,612 C960,616 962,620 963,625" fill="none" stroke="#000" stroke-width="0.9"/>
<path d="M966,593 C967,606 968,618 970,630" fill="none" stroke="#000" stroke-width="0.9"/>
<path d="M931,583 C929.5,587 933,589 937,588.5 C942,588 946,585 950,583.2 C954,581.8 957,583 960,585.5 C963,588 965.5,590.5 968.5,591.5" fill="none" stroke="#000" stroke-width="3.6" stroke-linecap="round"/>
<path d="M931,583 C929.5,587 933,589 937,588.5 C942,588 946,585 950,583.2 C954,581.8 957,583 960,585.5 C963,588 965.5,590.5 968.5,591.5" fill="none" stroke="#fff" stroke-width="1.7" stroke-linecap="round"/>
<path d="M956.2,589.5 C958,593 959.5,597 961,601" fill="none" stroke="#000" stroke-width="0.9"/></g>
<path d="M969.5,592 L968.2,533 C968.4,530.5 972,530.5 972.2,533 L973.5,592" fill="#fff" stroke="#000" stroke-width="1.1"/>
<path d="M971.8,632 L971.8,598 M970,604 L970,612" fill="none" stroke="#000" stroke-width="0.8"/>
<path d="M968,626 L972.8,634.5 L977,626 C975,629 970,629 968,626Z" fill="#000"/>
</svg><svg style="left:0;top:0" width="1" height="1">
<g fill="#3c3c3c"><rect x="1595" y="138" width="37" height="2"/><rect x="1595" y="207" width="37" height="2"/><rect x="1595" y="276" width="37" height="2"/><rect x="1595" y="318" width="37" height="2"/></g>
<g fill="#6b6b6b">
<path d="M1604 75h1v3h-1z M1606 75h1v3h-1z M1608 75h1v3h-1z M1610 75h1v3h-1z M1612 75h1v3h-1z M1614 75h1v3h-1z M1616 75h1v3h-1z M1618 75h1v3h-1z M1620 75h1v3h-1z M1622 75h1v3h-1z"/>
<path d="M1604 144h1v3h-1z M1606 144h1v3h-1z M1608 144h1v3h-1z M1610 144h1v3h-1z M1612 144h1v3h-1z M1614 144h1v3h-1z M1616 144h1v3h-1z M1618 144h1v3h-1z M1620 144h1v3h-1z M1622 144h1v3h-1z"/>
<path d="M1604 213h1v3h-1z M1606 213h1v3h-1z M1608 213h1v3h-1z M1610 213h1v3h-1z M1612 213h1v3h-1z M1614 213h1v3h-1z M1616 213h1v3h-1z M1618 213h1v3h-1z M1620 213h1v3h-1z M1622 213h1v3h-1z"/>
<path d="M1604 281h1v3h-1z M1606 281h1v3h-1z M1608 281h1v3h-1z M1610 281h1v3h-1z M1612 281h1v3h-1z M1614 281h1v3h-1z M1616 281h1v3h-1z M1618 281h1v3h-1z M1620 281h1v3h-1z M1622 281h1v3h-1z"/>
</g>
<g fill="#dedede" stroke="#dedede">
<!-- history -->
<rect x="1607.5" y="85.5" width="4" height="4" fill="none" stroke-width="1"/>
<rect x="1607.5" y="91.5" width="4" height="4" fill="none" stroke-width="1"/>
<rect x="1607" y="97" width="5" height="5" stroke="none"/>
<path d="M1615 87.5 C1620 89 1620 96 1615 100" fill="none" stroke-width="1.5"/>
<path d="M1613.5 85.5 L1618 86 L1615 89.5Z" stroke="none"/>
<!-- comment -->
<path d="M1608 115 H1621 C1621.8 115 1622 115.5 1622 116 V123.5 C1622 124 1621.8 124.5 1621 124.5 H1612.5 L1609.5 128 V124.5 H1608 C1607.5 124.5 1607 124 1607 123.5 V116 C1607 115.5 1607.5 115 1608 115Z" stroke="none"/>
<!-- brush settings -->
<path d="M1603 154h1.5v1.5h-1.5z M1603 157h1.5v1.5h-1.5z M1603 160h1.5v1.5h-1.5z M1606 154.5h3v1h-3z M1606 157.5h3v1h-3z M1606 160.5h3v1h-3z" stroke="none"/>
<path d="M1622.5 157 C1623.5 157.5 1623 158.5 1622 159.5 L1616 165.5 L1614 164 L1620 158.5 C1621 157.5 1621.8 156.8 1622.5 157Z" stroke="none"/>
<path d="M1613.5 164.5 L1615.5 166 C1615 168.5 1613 170.5 1608.5 170.5 C1610 169 1610 168 1611 166.5 C1611.8 165 1612.5 164.7 1613.5 164.5Z" stroke="none"/>
<!-- adjust sliders -->
<path d="M1603.5 187.5 C1604.5 185 1609 185 1610 187.5 C1609 190 1604.5 190 1603.5 187.5Z" stroke="none"/>
<rect x="1609" y="186.8" width="14" height="1.6" stroke="none"/>
<rect x="1604" y="193.5" width="10" height="1.6" stroke="none"/>
<path d="M1614 194.3 L1622 189.5 C1624 192 1624 197 1622 199.5Z" stroke="none"/>
<!-- A| -->
<path d="M1607 239.5 L1612.5 225.5 L1618 239.5 M1609.2 234.5 H1615.8" fill="none" stroke-width="1.3"/>
<rect x="1620.5" y="225" width="1.2" height="15" stroke="none"/>
<!-- pilcrow -->
<path d="M1614 247 H1620 V249 H1619 V267 H1617.5 V249 H1616 V267 H1614.5 V257.5 C1610.5 257.5 1609 255.5 1609 252.3 C1609 249 1611 247 1614 247Z" stroke="none"/>
<!-- cube -->
<path d="M1613.5 292.5 L1621 296.5 V305 L1613.5 309 L1606 305 V296.5Z" fill="none" stroke-width="1.2"/>
<path d="M1606 296.5 L1613.5 300.5 L1621 296.5 M1613.5 300.5 V309" fill="none" stroke-width="1.1"/>
<path d="M1606.6 297.5 L1613 301 V308 L1606.6 304.5Z" fill="#9a9a9a" stroke="none"/>
</g>
</svg>
<!-- color panel tabs -->
<div class="a" style="left:1635px;top:71px;width:284px;height:27px;background:#424242"></div>
<div class="a" style="left:1635px;top:71px;width:42px;height:28px;background:#535353"></div>
<div class="a" style="left:1737px;top:72px;width:1px;height:26px;background:#3a3a3a"></div>
<div class="a" style="left:1812px;top:72px;width:1px;height:26px;background:#3a3a3a"></div>
<div class="a" style="left:1868px;top:72px;width:1px;height:26px;background:#3a3a3a"></div>
<div class="t" style="left:1644px;top:78px;font-size:10px;font-weight:700;color:#f0f0f0">Color</div>
<div class="t" style="left:1686px;top:78px;font-size:10px;font-weight:700;color:#a9a9a9">Muestras</div>
<div class="t" style="left:1747px;top:78px;font-size:10px;font-weight:700;color:#a9a9a9">Degradados</div>
<div class="t" style="left:1822px;top:78px;font-size:10px;font-weight:700;color:#a9a9a9">Motivos</div>
<svg style="left:0;top:0" width="1" height="1">
<g fill="#d6d6d6"><rect x="1903" y="80" width="12" height="1"/><rect x="1903" y="82" width="12" height="1"/><rect x="1903" y="84" width="12" height="1"/><rect x="1903" y="86" width="12" height="1"/></g>
<!-- swatches -->
<rect x="1654.5" y="118.5" width="18" height="19" fill="#fff" stroke="#3a3a3a"/>
<rect x="1643.5" y="107.5" width="21" height="21" fill="#000" stroke="#7a7a7a"/>
<rect x="1644.5" y="108.5" width="19" height="19" fill="#000" stroke="#3a3a3a"/>
<rect x="1645.5" y="109.5" width="17" height="17" fill="#000" stroke="#fff"/>
</svg>
<div class="a" style="left:1680px;top:106px;width:187px;height:262px;background:linear-gradient(to bottom,rgba(0,0,0,0),#000),linear-gradient(to right,#fff 0%,#b4f1fb 22%,#62e9fc 36%,#30e7fe 44%,#00e5ff 47%,#00e5ff 100%)"></div>
<div class="a" style="left:1884px;top:106px;width:19px;height:262px;background:linear-gradient(to bottom,#ff1a0a 0.0%,#ff1a0a 3.2%,#e82a3c 3.2%,#e82a3c 5.8%,#ff0a6e 5.8%,#ff0a6e 9.6%,#ff0aa8 9.6%,#ff0aa8 14.6%,#f50af5 14.6%,#f50af5 21.5%,#a80aff 21.5%,#a80aff 26.5%,#5a0aff 26.5%,#5a0aff 30.9%,#0a14ff 30.9%,#0a14ff 36.9%,#1464ff 36.9%,#1464ff 40.3%,#1e90ff 40.3%,#1e90ff 44.3%,#28b4ff 44.3%,#28b4ff 46.3%,#0ae1ff 46.3%,#0ae1ff 51.3%,#0affc8 51.3%,#0affc8 57.2%,#0aff78 57.2%,#0aff78 61.1%,#0aff0a 61.1%,#0aff0a 77.0%,#82ee0a 77.0%,#82ee0a 80.5%,#d2f00a 80.5%,#d2f00a 85.0%,#ffff0a 85.0%,#ffff0a 88.4%,#ffc40a 88.4%,#ffc40a 91.4%,#ff6e0a 91.4%,#ff6e0a 95.3%,#ff1a0a 95.3%,#ff1a0a 100.0%)"></div>
<svg style="left:0;top:0" width="1" height="1">
<path d="M1875.5 223.5 L1879 223.5 L1882 227 L1879 230.5 L1875.5 230.5Z" fill="#e8e8e8"/>
<path d="M1680 364 A4 4 0 0 1 1685 369" fill="none" stroke="#fff" stroke-width="1"/>
</svg>
<div class="a" style="left:1635px;top:389px;width:284px;height:3px;background:#3b3b3b"></div><div class="a" style="left:1635px;top:390px;width:284px;height:1px;background:#474747"></div>
<!-- propiedades tabs -->
<div class="a" style="left:1635px;top:392px;width:284px;height:27px;background:#424242"></div>
<div class="a" style="left:1635px;top:392px;width:75px;height:28px;background:#535353"></div>
<div class="a" style="left:1761px;top:392px;width:1px;height:27px;background:#3a3a3a"></div>
<div class="a" style="left:1830px;top:392px;width:1px;height:27px;background:#3a3a3a"></div>
<div class="t" style="left:1644px;top:399px;font-size:10px;font-weight:700;color:#f0f0f0">Propiedades</div>
<div class="t" style="left:1719px;top:399px;font-size:10px;font-weight:700;color:#a9a9a9">Ajustes</div>
<div class="t" style="left:1771px;top:399px;font-size:10px;font-weight:700;color:#a9a9a9">Bibliotecas</div>
<svg style="left:0;top:0" width="1" height="1">
<g fill="#d6d6d6"><rect x="1903" y="401" width="12" height="1"/><rect x="1903" y="403" width="12" height="1"/><rect x="1903" y="405" width="12" height="1"/><rect x="1903" y="407" width="12" height="1"/></g>
<!-- pixel layer icon -->
<rect x="1645.5" y="425.5" width="22" height="22" rx="2" fill="#3e3e3e" stroke="#4a4a4a"/>
<rect x="1649.5" y="430.5" width="14" height="12" fill="none" stroke="#e0e0e0" stroke-width="1"/>
<path d="M1650 442 L1650 438 L1653 436 L1655 438 L1657 435 L1660 438 L1663 437 L1663 442Z" fill="#e0e0e0"/>
<rect x="1659" y="432" width="2" height="2" fill="#e0e0e0"/>
</svg>
<div class="t" style="left:1674px;top:432px;font-size:10px;color:#d8d8d8;letter-spacing:-0.2px">Capa de píxeles</div>
<div class="a" style="left:1635px;top:453px;width:268px;height:1px;background:#444"></div>
<!-- transformar -->
<svg style="left:0;top:0" width="1" height="1">
<path d="M1643 465.5 L1646.5 469 L1650 465.5" fill="none" stroke="#bdbdbd" stroke-width="1"/>
<path d="M1643 582 L1646.5 585.5 L1650 582" fill="none" stroke="#bdbdbd" stroke-width="1"/>
</svg>
<div class="t" style="left:1658px;top:462px;font-size:10.4px;font-weight:700;color:#e8e8e8">Transformar</div>
<svg style="left:0;top:0" width="1" height="1">
<rect x="1644" y="492.5" width="24" height="26" rx="3" fill="#3c3c3c" stroke="#4c4c4c"/>
<rect x="1652.5" y="498.5" width="7" height="7.5" rx="3.5" fill="none" stroke="#e0e0e0" stroke-width="1.5"/>
<rect x="1652.5" y="504.5" width="7" height="7.5" rx="3.5" fill="none" stroke="#e0e0e0" stroke-width="1.5"/>
<rect x="1654.8" y="501.5" width="2.4" height="7.5" rx="1.2" fill="#e0e0e0"/>
</svg>
<div class="t" style="left:1679px;top:487px;font-size:10px;color:#c8c8c8">An</div>
<div class="t" style="left:1682px;top:512px;font-size:10px;color:#c8c8c8">Al</div>
<div class="t" style="left:1772px;top:487px;font-size:10px;color:#c8c8c8">X</div>
<div class="t" style="left:1772px;top:512px;font-size:10px;color:#c8c8c8">Y</div>
<div class="inp" style="left:1696px;top:484px;width:53px;height:17px;border-radius:1px;background:#454545;border-color:#5e5e5e"></div>
<div class="inp" style="left:1696px;top:509px;width:53px;height:17px;border-radius:1px;background:#454545;border-color:#5e5e5e"></div>
<div class="inp" style="left:1782px;top:484px;width:53px;height:17px;border-radius:1px;background:#454545;border-color:#5e5e5e"></div>
<div class="inp" style="left:1782px;top:509px;width:53px;height:17px;border-radius:1px;background:#454545;border-color:#5e5e5e"></div>
<div class="t" style="left:1700px;top:487px;font-size:10px;color:#e8e8e8;letter-spacing:-0.2px">519 px</div>
<div class="t" style="left:1700px;top:512px;font-size:10px;color:#e8e8e8;letter-spacing:-0.2px">454 px</div>
<div class="t" style="left:1787px;top:487px;font-size:10px;color:#e8e8e8;letter-spacing:-0.2px">297 px</div>
<div class="t" style="left:1787px;top:512px;font-size:10px;color:#e8e8e8;letter-spacing:-0.2px">553 px</div>
<div class="inp" style="left:1694px;top:538px;width:54px;height:17px;border-radius:2px;background:#454545;border-color:#5e5e5e"></div>
<div class="a" style="left:1732px;top:539px;width:1px;height:15px;background:#5e5e5e"></div>
<div class="t" style="left:1698px;top:541px;font-size:10px;color:#e8e8e8;letter-spacing:-0.3px">0.00°</div>
<svg style="left:0;top:0" width="1" height="1">
<path d="M1737 545.5 L1740 548.5 L1743 545.5" fill="none" stroke="#cfcfcf" stroke-width="1"/>
<path d="M1689 551.5 L1676.5 551.5 L1686 543" fill="none" stroke="#d6d6d6" stroke-width="1.1"/>
<path d="M1682.5 546.5 Q1684.5 548.5 1684 551.5" fill="none" stroke="#d6d6d6" stroke-width="1"/>
<!-- flip h -->
<path d="M1786.5 542.5 L1791.5 547 L1786.5 551.5Z" fill="none" stroke="#d6d6d6" stroke-width="1"/>
<path d="M1802 542.5 L1797 547 L1802 551.5Z" fill="#d6d6d6"/>
<path d="M1794.3 540 V554" stroke="#d6d6d6" stroke-width="1" stroke-dasharray="1.2 1.2"/>
<!-- flip v -->
<path d="M1818 539.5 L1827.5 539.5 L1822.8 544Z" fill="none" stroke="#d6d6d6" stroke-width="1"/>
<path d="M1818 553.5 L1827.5 553.5 L1822.8 548.5Z" fill="#d6d6d6"/>
<path d="M1816 546.3 H1830" stroke="#d6d6d6" stroke-width="1" stroke-dasharray="1.2 1.2"/>
</svg>
<div class="a" style="left:1635px;top:570px;width:268px;height:1px;background:#444"></div>
<div class="t" style="left:1659px;top:579px;font-size:10.3px;font-weight:700;color:#e8e8e8">Alinear y distribuir</div>
<div class="t" style="left:1644px;top:601px;font-size:10px;color:#d0d0d0">Alinear:</div>
<svg style="left:0;top:0" width="1" height="1">
<g fill="#a9a9a9">
<rect x="1650" y="627" width="1" height="15"/><rect x="1652" y="630" width="7" height="3.6"/><rect x="1652" y="636" width="11" height="3.8"/>
<rect x="1685" y="627" width="1" height="16"/><rect x="1682" y="630" width="7" height="3.6"/><rect x="1680" y="636" width="11" height="3.8"/>
<rect x="1719" y="627" width="1" height="15"/><rect x="1711" y="630" width="7" height="3.6"/><rect x="1707" y="636" width="11" height="3.8"/>
<rect x="1753" y="629" width="14" height="1"/><rect x="1755" y="631" width="3.8" height="11"/><rect x="1761" y="631" width="3.6" height="7"/>
<rect x="1782" y="635" width="14" height="1"/><rect x="1784" y="630" width="3.8" height="11"/><rect x="1790" y="632" width="3.6" height="7"/>
<rect x="1811" y="640" width="14" height="1"/><rect x="1813" y="628" width="3.6" height="11"/><rect x="1819" y="632" width="3.6" height="7"/>
</g>
<circle cx="1819.5" cy="665.5" r="1.2" fill="#e0e0e0"/><circle cx="1824" cy="665.5" r="1.2" fill="#e0e0e0"/><circle cx="1828.5" cy="665.5" r="1.2" fill="#e0e0e0"/>
</svg>
<div class="a" style="left:1635px;top:679px;width:268px;height:1px;background:#444"></div>
<!-- props scrollbar -->
<div class="a" style="left:1903px;top:456px;width:16px;height:228px;background:#4a4a4a"></div>
<div class="a" style="left:1905px;top:472px;width:12px;height:128px;background:#6a6a6a"></div>
<svg style="left:0;top:0" width="1" height="1">
<path d="M1908 466 L1911.5 462.5 L1915 466" fill="none" stroke="#a0a0a0" stroke-width="1"/>
<path d="M1908 673 L1911.5 676.5 L1915 673" fill="none" stroke="#a0a0a0" stroke-width="1"/>
</svg>
<div class="a" style="left:1635px;top:710px;width:284px;height:3px;background:#3b3b3b"></div><div class="a" style="left:1635px;top:711px;width:284px;height:1px;background:#474747"></div>
<!-- capas tabs -->
<div class="a" style="left:1635px;top:713px;width:284px;height:27px;background:#424242"></div>
<div class="a" style="left:1635px;top:713px;width:45px;height:28px;background:#535353"></div>
<div class="a" style="left:1734px;top:713px;width:1px;height:27px;background:#3a3a3a"></div>
<div class="a" style="left:1792px;top:713px;width:1px;height:27px;background:#3a3a3a"></div>
<div class="t" style="left:1644px;top:720px;font-size:10px;font-weight:700;color:#f0f0f0">Capas</div>
<div class="t" style="left:1689px;top:720px;font-size:10px;font-weight:700;color:#a9a9a9">Canales</div>
<div class="t" style="left:1743px;top:720px;font-size:10px;font-weight:700;color:#a9a9a9">Trazados</div>
<div class="inp" style="left:1638px;top:749px;width:109px;height:21px;background:#424242;border-color:#5a5a5a"></div>
<div class="t" style="left:1661px;top:753px;font-size:10px;color:#e6e6e6">Tipo</div>
<div class="a" style="left:1635px;top:771px;width:284px;height:1px;background:#464646"></div>
<div class="inp" style="left:1638px;top:777px;width:166px;height:21px;background:#424242;border-color:#5a5a5a"></div>
<div class="t" style="left:1647px;top:781px;font-size:10px;color:#e6e6e6">Normal</div>
<div class="t" style="left:1808px;top:781px;font-size:10px;color:#d6d6d6;letter-spacing:-0.3px">Opacidad:</div>
<div class="inp" style="left:1857px;top:778px;width:52px;height:18px;background:#454545;border-color:#5a5a5a"></div>
<div class="a" style="left:1893px;top:779px;width:1px;height:16px;background:#5a5a5a"></div>
<div class="t" style="left:1862px;top:781px;font-size:10px;color:#e6e6e6;letter-spacing:-0.3px">100%</div>
<div class="a" style="left:1635px;top:800px;width:284px;height:1px;background:#464646"></div>
<div class="t" style="left:1641px;top:809px;font-size:10px;color:#d6d6d6;letter-spacing:-0.3px">Bloq.:</div>
<div class="t" style="left:1819px;top:809px;font-size:10px;color:#d6d6d6;letter-spacing:-0.3px">Relleno:</div>
<div class="inp" style="left:1857px;top:806px;width:52px;height:17px;background:#454545;border-color:#5a5a5a"></div>
<div class="a" style="left:1893px;top:807px;width:1px;height:15px;background:#5a5a5a"></div>
<div class="t" style="left:1862px;top:809px;font-size:10px;color:#e6e6e6;letter-spacing:-0.3px">100%</div>
<svg style="left:0;top:0" width="1" height="1">
<g fill="#d6d6d6"><rect x="1903" y="722" width="12" height="1"/><rect x="1903" y="724" width="12" height="1"/><rect x="1903" y="726" width="12" height="1"/><rect x="1903" y="728" width="12" height="1"/></g>
<!-- search -->
<circle cx="1651" cy="758" r="3.6" fill="none" stroke="#e6e6e6" stroke-width="1.4"/>
<path d="M1653.5 760.5 L1656.5 763.5" stroke="#e6e6e6" stroke-width="1.8"/>
<path d="M1736 757.5 L1739.5 761 L1743 757.5" fill="none" stroke="#c8c8c8" stroke-width="1"/>
<path d="M1793 785.5 L1796.5 789 L1800 785.5" fill="none" stroke="#c8c8c8" stroke-width="1"/>
<path d="M1898 785.5 L1901.5 789 L1905 785.5" fill="none" stroke="#c8c8c8" stroke-width="1"/>
<path d="M1898 813.5 L1901.5 817 L1905 813.5" fill="none" stroke="#c8c8c8" stroke-width="1"/>
<g fill="#d6d6d6" stroke="#d6d6d6">
<!-- filter icons -->
<rect x="1769.5" y="754.5" width="11" height="9" fill="none" stroke-width="1"/>
<path d="M1771 762 L1773.5 758.5 L1775.5 760.5 L1777 758 L1779 762Z" stroke="none"/>
<circle cx="1799.5" cy="759.3" r="5" fill="none" stroke-width="1.1"/>
<path d="M1803 755.8 A5 5 0 0 1 1796 762.8Z" stroke="none"/>
<path d="M1819 754 H1829 V756.5 H1828 V755.5 H1825 V763 H1826.5 V764 H1821.5 V763 H1823 V755.5 H1820 V756.5 H1819Z" stroke="none"/>
<rect x="1843.5" y="754.5" width="9" height="9" fill="none" stroke-width="1"/>
<rect x="1842" y="753" width="3" height="3" stroke="none"/><rect x="1851" y="753" width="3" height="3" stroke="none"/><rect x="1842" y="762" width="3" height="3" stroke="none"/><rect x="1851" y="762" width="3" height="3" stroke="none"/>
<path d="M1870.5 753.5 H1874.5 L1876.5 755.5 V763.5 H1870.5Z" fill="none" stroke-width="1"/>
<rect x="1866" y="758" width="6" height="6" stroke="none"/>
</g>
<!-- toggle -->
<rect x="1900.5" y="750.5" width="9" height="18" rx="4.5" fill="#454545" stroke="#5e5e5e"/>
<circle cx="1905" cy="754.5" r="4" fill="#e0e0e0"/>
<!-- lock icons -->
<g fill="#d6d6d6" stroke="#d6d6d6">
<rect x="1676.5" y="808.5" width="10" height="10" fill="none" stroke-width="1"/>
<rect x="1677" y="809" width="3" height="3" stroke="none"/><rect x="1683" y="809" width="3" height="3" stroke="none"/><rect x="1680" y="812" width="3" height="3" stroke="none"/><rect x="1677" y="815" width="3" height="3" stroke="none"/><rect x="1683" y="815" width="3" height="3" stroke="none"/>
<path d="M1710 808 C1711 808.5 1710.5 809.5 1709.5 810.5 L1704.5 816 L1703 815 L1708 809.5 C1709 808.5 1709.5 807.8 1710 808Z" stroke="none"/>
<path d="M1702.5 815.5 L1704 816.5 C1703.5 819 1701.5 821 1697.5 821 C1699 819.5 1699 818.5 1700 817 C1700.8 815.8 1701.5 815.6 1702.5 815.5Z" stroke="none"/>
<path d="M1725.5 808 V821 M1719 814.5 H1732" fill="none" stroke-width="1.1"/>
<path d="M1725.5 807.5 L1723.5 810 H1727.5Z M1725.5 821.5 L1723.5 819 H1727.5Z M1718.5 814.5 L1721 812.5 V816.5Z M1732.5 814.5 L1730 812.5 V816.5Z" stroke="none"/>
<path d="M1743.5 809 V820.5 H1753.5 M1741 811.5 H1751 V823" fill="none" stroke-width="1.1"/>
<path d="M1752 808.5 L1754.5 806" stroke-width="1" fill="none" stroke-dasharray="1 1"/>
<path d="M1767 813 V811 A3 3 0 0 1 1773 811 V813" fill="none" stroke-width="1.5"/>
<rect x="1765.5" y="813" width="9" height="8" stroke="none"/>
<rect x="1769.3" y="816" width="1.5" height="2.2" fill="#535353" stroke="none"/>
</g>
</svg>
<!-- layer rows -->
<div class="a" style="left:1635px;top:870px;width:268px;height:1px;background:#464646"></div>
<div class="a" style="left:1635px;top:911px;width:268px;height:1px;background:#464646"></div>
<div class="a" style="left:1635px;top:952px;width:268px;height:1px;background:#464646"></div>
<div class="a" style="left:1635px;top:993px;width:268px;height:1px;background:#464646"></div>
<div class="a" style="left:1664px;top:831px;width:1px;height:175px;background:#464646"></div>
<div class="a" style="left:1635px;top:1006px;width:284px;height:1px;background:#3f3f3f"></div>
<svg style="left:0;top:0" width="1" height="1">
<defs>
<pattern id="chk" x="1670" y="837" width="8" height="8" patternUnits="userSpaceOnUse"><rect width="8" height="8" fill="#fff"/><rect width="4" height="4" fill="#cdcdcd"/><rect x="4" y="4" width="4" height="4" fill="#cdcdcd"/></pattern>
<pattern id="chk2" x="1670" y="837" width="8" height="8" patternUnits="userSpaceOnUse"><rect width="8" height="8" fill="#fff"/><rect x="4" width="4" height="4" fill="#cdcdcd"/><rect y="4" width="4" height="4" fill="#cdcdcd"/></pattern>
<g id="eye"><path d="M-7 0 C-4 -4.5 4 -4.5 7 0 C4 4.5 -4 4.5 -7 0Z" fill="#e0e0e0"/><circle r="2.8" fill="#535353"/><circle r="2.1" fill="#2c2c2c"/><circle cx="0.8" cy="-0.8" r="0.7" fill="#bbb"/></g>
</defs>
<use href="#eye" x="1650.5" y="852.5"/>
<use href="#eye" x="1650.5" y="893.5"/>
<use href="#eye" x="1650.5" y="934.5"/>
<use href="#eye" x="1650.5" y="975.5"/>
<rect x="1669" y="835" width="19" height="32" fill="#2a2a2a"/><rect x="1670" y="837" width="17" height="29" fill="url(#chk2)"/>
<rect x="1669" y="876" width="19" height="32" fill="#2a2a2a"/><rect x="1670" y="878" width="17" height="29" fill="url(#chk2)"/>
<rect x="1669" y="917" width="19" height="32" fill="#2a2a2a"/><rect x="1670" y="919" width="17" height="29" fill="url(#chk2)"/>
<rect x="1669" y="958" width="19" height="32" fill="#2a2a2a"/><rect x="1670" y="960" width="17" height="29" fill="url(#chk2)"/>
<rect x="1669" y="999" width="19" height="7" fill="#2a2a2a"/><rect x="1670" y="1001" width="17" height="5" fill="url(#chk2)"/>
</svg>
<div class="t" style="left:1697px;top:846px;font-size:9.5px;color:#e8e8e8">Capa 1 copia</div>
<div class="t" style="left:1697px;top:887px;font-size:9.5px;color:#e8e8e8">Capa 1</div>
<div class="t" style="left:1697px;top:928px;font-size:9.5px;color:#e8e8e8">Capa 4</div>
<div class="t" style="left:1697px;top:969px;font-size:9.5px;color:#e8e8e8">Capa 3 copia</div>
<!-- layers scrollbar -->
<div class="a" style="left:1903px;top:831px;width:16px;height:175px;background:#4a4a4a"></div>
<div class="a" style="left:1905px;top:848px;width:12px;height:53px;background:#6a6a6a"></div>
<svg style="left:0;top:0" width="1" height="1">
<path d="M1908 841 L1911.5 837.5 L1915 841" fill="none" stroke="#a0a0a0" stroke-width="1"/>
<path d="M1908 995 L1911.5 998.5 L1915 995" fill="none" stroke="#a0a0a0" stroke-width="1"/>
<!-- bottom toolbar -->
<g fill="#d9d9d9" stroke="#d9d9d9">
<path d="M1721 1015.5 H1719.5 A3 3 0 0 0 1719.5 1021.5 H1721 M1727 1015.5 H1728.5 A3 3 0 0 1 1728.5 1021.5 H1727 M1720.5 1018.5 H1727.5" fill="none" stroke="#a5a5a5" stroke-width="1.2"/>
<rect x="1771" y="1013" width="13" height="10" stroke="none"/>
<circle cx="1777.5" cy="1018" r="2.8" fill="#535353" stroke="none"/>
<circle cx="1805.5" cy="1018.5" r="5" fill="none" stroke-width="1.1"/>
<path d="M1809 1015 A5 5 0 0 1 1802 1022Z" stroke="none"/>
<path d="M1809 1024 L1812 1024 L1810.5 1025.5Z M1756 1024 L1759 1024 L1757.5 1025.5Z" stroke="none"/>
<path d="M1826 1014 H1830 L1831 1013 H1826Z" stroke="none"/>
<rect x="1826" y="1015" width="12" height="9" stroke="none"/>
<rect x="1854.5" y="1013.5" width="10.5" height="11" fill="none" stroke-width="1.1"/>
<path d="M1859.8 1016 V1022 M1856.8 1019 H1862.8" stroke-width="1.2" fill="none"/>
<path d="M1880 1015.5 H1892 M1884 1015.5 V1013.5 H1888 V1015.5" fill="none" stroke-width="1.1"/>
<path d="M1881.5 1016.5 H1890.5 V1025 H1881.5Z" fill="none" stroke-width="1.1"/>
<path d="M1884 1018 V1023.5 M1886 1018 V1023.5 M1888 1018 V1023.5" stroke-width="0.8" fill="none"/>
</g>
</svg>
<div class="t" style="left:1745px;top:1010px;font-size:13px;font-style:italic;font-family:'Liberation Serif',serif;color:#d9d9d9">fx</div>
<!-- status bar -->

<div class="a" style="left:41px;top:1015px;width:48px;height:16px;background:#4a4a4a"></div>
<div class="a" style="left:89px;top:1015px;width:234px;height:16px;background:#535353"></div>
<div class="a" style="left:323px;top:1015px;width:1253px;height:16px;background:#4a4a4a"></div>
<div class="a" style="left:607px;top:1017px;width:572px;height:12px;background:#6a6a6a"></div>
<div class="a" style="left:1576px;top:1015px;width:16px;height:16px;background:#535353"></div>
<div class="a" style="left:0;top:1031px;width:1919px;height:1px;background:#3a3a3a"></div>
<div class="t" style="left:48px;top:1017px;font-size:10px;color:#e8e8e8;letter-spacing:-0.2px">36.97%</div>
<div class="t" style="left:126px;top:1017px;font-size:10px;color:#dcdcdc">1080 px x 1920 px (118.11 ppcm)</div>
<svg style="left:0;top:0" width="1" height="1">
<path d="M313 1019 L316.5 1023 L313 1027" fill="none" stroke="#d0d0d0" stroke-width="1.1"/>
<path d="M334 1020 L331 1023 L334 1026" fill="none" stroke="#8a8a8a" stroke-width="1"/>
<path d="M1563 1020 L1566 1023 L1563 1026" fill="none" stroke="#8a8a8a" stroke-width="1"/>
</svg>
<!-- taskbar -->
<div class="a" style="left:0;top:1032px;width:1919px;height:46px;background:#dadbe5"></div><div class="a" style="left:0;top:1032px;width:1919px;height:1px;background:#a9a9ad"></div>
<!-- weather -->
<svg style="left:0;top:0" width="1" height="1">
<circle cx="29" cy="1053" r="8.5" fill="#f4a62a"/>
<path d="M25 1067 C19 1067 19 1059 25 1059 C26 1054 34 1054 35.5 1058.5 C41 1058 42 1067 37 1067Z" fill="#d4e6f6" stroke="#8fbde6" stroke-width="0.9"/>
<circle cx="37.5" cy="1044.5" r="7" fill="#c42b1c"/>
</svg>
<div class="t" style="left:35px;top:1038px;font-size:10px;color:#fff">1</div>
<div class="t" style="left:50px;top:1041px;font-size:11px;color:#1a1a1a">31°C</div>
<div class="t" style="left:50px;top:1056px;font-size:11.5px;color:#3a3a3a">Parc. soleado</div>
<!-- windows logo -->
<svg style="left:0;top:0" width="1" height="1">
<defs><linearGradient id="wg" x1="0" y1="0" x2="1" y2="1"><stop offset="0" stop-color="#3fc4f4"/><stop offset="1" stop-color="#0078d4"/></linearGradient></defs>
<rect x="617" y="1045" width="11" height="11" fill="url(#wg)"/><rect x="629" y="1045" width="11" height="11" fill="url(#wg)"/>
<rect x="617" y="1057" width="11" height="11" fill="url(#wg)"/><rect x="629" y="1057" width="11" height="11" fill="url(#wg)"/>
</svg>
<!-- search pill -->
<div class="a" style="left:654px;top:1041px;width:218px;height:30px;background:#f2f3f7;border:1px solid #d0d1d8;border-radius:15px"></div>
<svg style="left:0;top:0" width="1" height="1">
<circle cx="671" cy="1055" r="5.5" fill="none" stroke="#1a1a1a" stroke-width="1.6"/>
<path d="M675 1059 L679 1063" stroke="#1a1a1a" stroke-width="1.8"/>
<!-- flowers decoration -->
<ellipse cx="843" cy="1063" rx="22" ry="5" fill="#8a8f7a"/>
<circle cx="836" cy="1061" r="5" fill="#f2c14e"/><circle cx="829" cy="1059" r="4" fill="#e89a7a"/>
<circle cx="851" cy="1058" r="4.5" fill="#f0b3a8"/><circle cx="857" cy="1062" r="4" fill="#f4a0a0"/>
<rect x="845" y="1052" width="3" height="10" fill="#9b7fd1"/>
<path d="M832 1055 L836 1047 L840 1055 M838 1052 L842 1046 L845 1053" stroke="#9aa0a0" stroke-width="1.5" fill="none"/>
<path d="M855 1052 L860 1046 M858 1054 L864 1048" stroke="#6fa86f" stroke-width="2" fill="none"/>
</svg>
<div class="t" style="left:690px;top:1048px;font-size:13px;line-height:15px;color:#5a5a5a">Buscar</div>
<svg style="left:0;top:0" width="1" height="1">
<!-- task view -->
<rect x="892" y="1045" width="17" height="15" rx="1.5" fill="#f4f4f4"/>
<rect x="885" y="1053" width="18" height="15" rx="1.5" fill="#1e1e1e"/>
<rect x="892" y="1053" width="11" height="7" fill="#9a9a9a"/>
<!-- copilot -->
<defs><linearGradient id="cp1" x1="0" y1="0" x2="1" y2="1"><stop offset="0" stop-color="#2ec6c0"/><stop offset="0.5" stop-color="#3a86f0"/><stop offset="1" stop-color="#6ad36a"/></linearGradient>
<linearGradient id="cp2" x1="0" y1="0" x2="1" y2="1"><stop offset="0" stop-color="#b657e8"/><stop offset="0.5" stop-color="#f25d8a"/><stop offset="1" stop-color="#ff9a3c"/></linearGradient></defs>
<path d="M934 1047 C936 1045.5 943 1045.5 946 1046.5 C949 1047.5 948 1050 947 1053 L941.5 1065 C940.5 1067 939 1068 936.5 1068 C932 1068 928 1067.5 929 1063 L932.5 1050 C933 1048.5 933.5 1047.5 934 1047Z" fill="url(#cp1)"/>
<path d="M947 1046.5 C951 1046.5 953.5 1049 952.5 1053 L949 1064 C948 1067 945.5 1068 942.5 1068 C939 1068 937.5 1066.5 938 1064.5 L943 1051 C943.8 1048.5 945 1046.5 947 1046.5Z" fill="url(#cp2)" opacity="0.95"/>
<path d="M938.5 1052 H943.5 L939.5 1062 H935Z" fill="#e8e2f0" opacity="0.55"/>
<!-- store -->
<path d="M980 1048 C980 1043 989 1043 989 1048" fill="none" stroke="#2d7fd3" stroke-width="2"/>
<rect x="973" y="1047" width="23" height="21" rx="3" fill="#1f5fa8"/>
<rect x="979" y="1052" width="5" height="5" fill="#f25022"/><rect x="985" y="1052" width="5" height="5" fill="#7fba00"/>
<rect x="979" y="1058" width="5" height="5" fill="#00a4ef"/><rect x="985" y="1058" width="5" height="5" fill="#ffb900"/>
<!-- explorer -->
<path d="M1017 1046 H1025 L1027 1048 H1041 V1067 H1017Z" fill="#e8a317"/>
<rect x="1017" y="1049" width="24" height="18" rx="1" fill="#fbd155"/>
<rect x="1022" y="1059" width="14" height="8" rx="1.5" fill="#2b8be6"/>
<rect x="1025" y="1071" width="8" height="3" rx="1.5" fill="#6e6e6e"/>
<!-- edge -->
<defs><linearGradient id="eg" x1="0" y1="0" x2="1" y2="1"><stop offset="0" stop-color="#35c1f1"/><stop offset="0.5" stop-color="#1a8bd6"/><stop offset="1" stop-color="#54c36b"/></linearGradient></defs>
<circle cx="1073" cy="1056" r="12" fill="url(#eg)"/>
<path d="M1064 1062 C1064 1054 1073 1050 1079 1056 C1075 1054 1070 1057 1072 1062 C1074 1066 1081 1066 1084 1062 C1081 1068 1066 1070 1064 1062Z" fill="#0c5aa6"/>
<path d="M1072 1060 C1072 1056 1078 1054 1081 1058 C1083 1061 1077 1064 1072 1060Z" fill="#eaf6fb" opacity="0.9"/>
<!-- chrome -->
<circle cx="1117" cy="1056" r="12" fill="#db4437"/>
<path d="M1117 1056 L1106.6 1062 A12 12 0 0 0 1123 1066.4Z" fill="#0f9d58"/>
<path d="M1117 1056 L1123 1066.4 A12 12 0 0 0 1127.4 1050 H1117Z" fill="#f4b400"/>
<path d="M1117 1056 L1127.4 1050 A12 12 0 0 0 1117 1044 L1106.6 1050 L1117 1056" fill="#db4437"/>
<circle cx="1117" cy="1056" r="5.2" fill="#fff"/><circle cx="1117" cy="1056" r="4.1" fill="#4285f4"/>
<rect x="1113" y="1071" width="8" height="3" rx="1.5" fill="#6e6e6e"/>
<!-- sticky notes -->
<rect x="1150" y="1045" width="22" height="22" rx="2" fill="#2b2b2b"/>
<path d="M1172 1055 V1067 H1160Z" fill="#ffd83a"/>
<rect x="1157" y="1071" width="8" height="3" rx="1.5" fill="#6e6e6e"/>
<!-- steam -->
<circle cx="1205" cy="1056" r="11.5" fill="#1b3a56"/>
<circle cx="1209" cy="1052" r="4" fill="none" stroke="#e8eef2" stroke-width="1.8"/>
<path d="M1195 1059 L1203 1062 L1206 1055" fill="none" stroke="#e8eef2" stroke-width="2.2"/>
<circle cx="1202" cy="1061" r="2.2" fill="#e8eef2"/>
<rect x="1200" y="1071" width="8" height="3" rx="1.5" fill="#6e6e6e"/>
<!-- discord -->
<rect x="1229" y="1036" width="40" height="39" rx="4" fill="#e8b3b6"/>
<circle cx="1249" cy="1056" r="12" fill="#5865f2"/>
<path d="M1242 1051 C1245 1049 1253 1049 1256 1051 C1258 1054 1258.5 1058 1257.5 1061 C1256 1062 1254.5 1062.5 1253 1063 L1252 1061 C1250 1061.7 1248 1061.7 1246 1061 L1245 1063 C1243.5 1062.5 1242 1062 1240.5 1061 C1239.5 1058 1240 1054 1242 1051Z" fill="#fff"/>
<circle cx="1245.8" cy="1056.5" r="1.6" fill="#5865f2"/><circle cx="1252.2" cy="1056.5" r="1.6" fill="#5865f2"/>
<circle cx="1258.5" cy="1047" r="6.5" fill="#e04a4a"/>
<rect x="1244" y="1072" width="11" height="3" rx="1.5" fill="#d0302f"/>
<!-- photoshop -->
<rect x="1274" y="1036" width="38" height="39" rx="4" fill="#eeeff3"/>
<rect x="1281" y="1045" width="22" height="22" rx="3" fill="#001e36"/>
<rect x="1285" y="1072" width="15" height="3" rx="1.5" fill="#1a73e8"/>
</svg>
<div class="t" style="left:1252.5px;top:1041px;font-size:9px;color:#fff;font-weight:700">9+</div>
<div class="t" style="left:1283.5px;top:1049px;font-size:12px;color:#31a8ff;font-weight:700;letter-spacing:-0.5px">Ps</div>
<!-- tray -->
<svg style="left:0;top:0" width="1" height="1">
<path d="M1689 1059.5 L1694.5 1054 L1700 1059.5" fill="none" stroke="#1a1a1a" stroke-width="1.3"/>
<circle cx="1726" cy="1056" r="8" fill="#1b4d7e"/>
<circle cx="1729" cy="1053.5" r="2.8" fill="none" stroke="#fff" stroke-width="1.3"/>
<path d="M1719 1058 L1724.5 1060 L1727 1055" fill="none" stroke="#fff" stroke-width="1.6"/>
<path d="M1752 1061 C1747 1061 1747 1054 1752 1054 C1753 1049 1762 1049 1763 1054 C1768 1054 1768 1061 1763 1061Z" fill="none" stroke="#1a1a1a" stroke-width="1.3"/>
<path d="M1749 1049 L1767 1064" stroke="#1a1a1a" stroke-width="1.3"/>
<rect x="1782.5" y="1049.5" width="12" height="10" fill="none" stroke="#1a1a1a" stroke-width="1.2"/>
<path d="M1788.5 1059.5 V1063.5 M1785 1063.5 H1792" stroke="#1a1a1a" stroke-width="1.2"/>
<rect x="1794" y="1047" width="3" height="6" fill="#dadbe5" stroke="#1a1a1a" stroke-width="1"/>
<path d="M1806.5 1053.5 H1809 L1813 1050 V1062 L1809 1058.5 H1806.5Z" fill="none" stroke="#1a1a1a" stroke-width="1.2"/>
<path d="M1815.5 1053 Q1817 1056 1815.5 1059 M1817.5 1051 Q1820 1056 1817.5 1061" fill="none" stroke="#1a1a1a" stroke-width="1.1"/>
</svg>
<div class="t" style="left:1843px;top:1041px;font-size:11.5px;color:#1a1a1a">12:20 p. m.</div>
<div class="t" style="left:1839px;top:1057px;font-size:12px;color:#1a1a1a;letter-spacing:-0.1px">24/05/2025</div>
</body></html>
